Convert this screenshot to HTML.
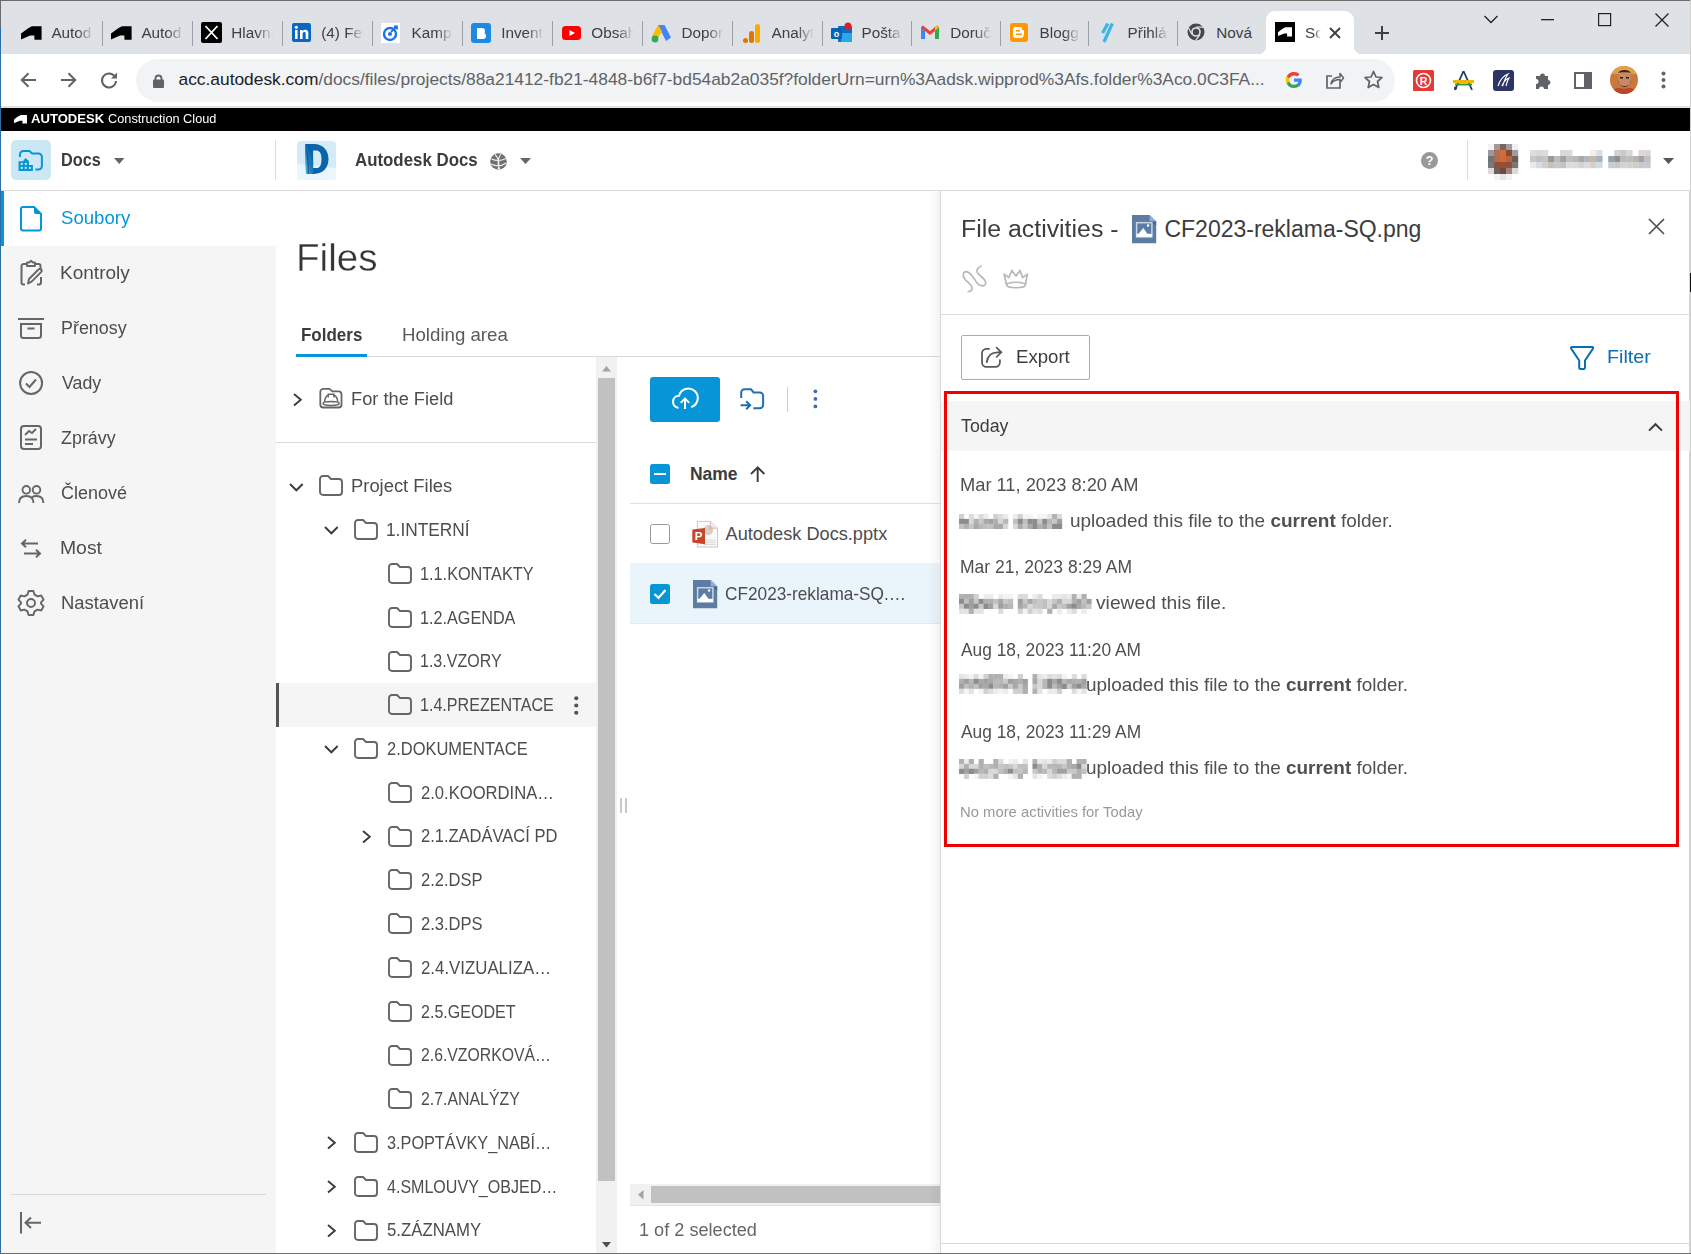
<!DOCTYPE html>
<html><head><meta charset="utf-8">
<style>
*{box-sizing:border-box;margin:0;padding:0}
html,body{width:1691px;height:1254px;overflow:hidden;background:#fff;font-family:"Liberation Sans",sans-serif;position:relative}
.a{position:absolute}
.t{position:absolute;white-space:nowrap;line-height:1;}
.t b{font-weight:bold}
svg{position:absolute;overflow:visible}
.fade{-webkit-mask-image:linear-gradient(90deg,#000 60%,transparent 100%);overflow:hidden}
</style></head><body>
<div class="a" style="left:0px;top:0px;width:1691px;height:54px;background:#dee1e6;"></div>
<div class="a" style="left:0px;top:0px;width:1691px;height:1px;background:#6b6b6b;"></div>
<div class="t fade" style="left:51.4px;top:25.3px;width:42.3px;height:20px;font-size:15.3px;color:#3c4043">Autod</div>
<div class="a" style="left:101.7px;top:21px;width:1px;height:25px;background:#9aa0a6;"></div>
<div class="t fade" style="left:141.4px;top:25.3px;width:42.2px;height:20px;font-size:15.3px;color:#3c4043">Autod</div>
<div class="a" style="left:191.6px;top:21px;width:1px;height:25px;background:#9aa0a6;"></div>
<div class="t fade" style="left:231.3px;top:25.3px;width:42.2px;height:20px;font-size:15.3px;color:#3c4043">Hlavní</div>
<div class="a" style="left:281.5px;top:21px;width:1px;height:25px;background:#9aa0a6;"></div>
<div class="t fade" style="left:321.2px;top:25.3px;width:42.7px;height:20px;font-size:15.3px;color:#3c4043">(4) Fee</div>
<div class="a" style="left:371.9px;top:21px;width:1px;height:25px;background:#9aa0a6;"></div>
<div class="t fade" style="left:411.6px;top:25.3px;width:41.9px;height:20px;font-size:15.3px;color:#3c4043">Kampa</div>
<div class="a" style="left:461.5px;top:21px;width:1px;height:25px;background:#9aa0a6;"></div>
<div class="t fade" style="left:501.2px;top:25.3px;width:42.4px;height:20px;font-size:15.3px;color:#3c4043">Invent</div>
<div class="a" style="left:551.6px;top:21px;width:1px;height:25px;background:#9aa0a6;"></div>
<div class="t fade" style="left:591.3px;top:25.3px;width:42.5px;height:20px;font-size:15.3px;color:#3c4043">Obsah</div>
<div class="a" style="left:641.8px;top:21px;width:1px;height:25px;background:#9aa0a6;"></div>
<div class="t fade" style="left:681.5px;top:25.3px;width:42.4px;height:20px;font-size:15.3px;color:#3c4043">Dopor</div>
<div class="a" style="left:731.9px;top:21px;width:1px;height:25px;background:#9aa0a6;"></div>
<div class="t fade" style="left:771.6px;top:25.3px;width:42.2px;height:20px;font-size:15.3px;color:#3c4043">Analyt</div>
<div class="a" style="left:821.8px;top:21px;width:1px;height:25px;background:#9aa0a6;"></div>
<div class="t fade" style="left:861.5px;top:25.3px;width:41.0px;height:20px;font-size:15.3px;color:#3c4043">Pošta</div>
<div class="a" style="left:910.5px;top:21px;width:1px;height:25px;background:#9aa0a6;"></div>
<div class="t fade" style="left:950.2px;top:25.3px;width:41.7px;height:20px;font-size:15.3px;color:#3c4043">Doruč</div>
<div class="a" style="left:999.9px;top:21px;width:1px;height:25px;background:#9aa0a6;"></div>
<div class="t fade" style="left:1039.6px;top:25.3px;width:40.3px;height:20px;font-size:15.3px;color:#3c4043">Blogg</div>
<div class="a" style="left:1087.9px;top:21px;width:1px;height:25px;background:#9aa0a6;"></div>
<div class="t fade" style="left:1127.6px;top:25.3px;width:41.0px;height:20px;font-size:15.3px;color:#3c4043">Přihlás</div>
<div class="a" style="left:1176.6px;top:21px;width:1px;height:25px;background:#9aa0a6;"></div>
<div class="t" style="left:1216.3px;top:25.3px;width:45.0px;height:20px;font-size:15.3px;color:#3c4043">Nová</div>
<svg style="left:20.5px;top:26px" width="21" height="14" viewBox="0 0 21 14"><path d="M0 13.4 V7.6 C3 5 7 2 11 0.2 H20.6 V13.8 H13.4 V9.4 H9.2 Z" fill="#000"/></svg>
<svg style="left:110.5px;top:26px" width="21" height="14" viewBox="0 0 21 14"><path d="M0 13.4 V7.6 C3 5 7 2 11 0.2 H20.6 V13.8 H13.4 V9.4 H9.2 Z" fill="#000"/></svg>
<svg style="left:201px;top:22px" width="20.5" height="20.5" viewBox="0 0 20.5 20.5"><rect width="21" height="21" rx="2" fill="#000"/><path d="M4.5 4 L16.5 17 M16.5 4 L4.5 17" stroke="#fff" stroke-width="1.8"/></svg>
<svg style="left:292px;top:23px" width="18" height="18" viewBox="0 0 18 18"><rect width="19" height="19" rx="2" fill="#0a66c2"/><rect x="3" y="7" width="2.6" height="9" fill="#fff"/><circle cx="4.3" cy="4.3" r="1.6" fill="#fff"/><path d="M8 7 h2.5 v1.3 c0.8-1.2 1.8-1.6 3-1.6 c2 0 2.8 1.3 2.8 3.5 V16 h-2.6 v-5.2 c0-1.2-0.4-1.8-1.4-1.8 c-1 0-1.7 0.7-1.7 2 V16 H8 Z" fill="#fff"/></svg>
<svg style="left:381px;top:23px" width="19" height="20" viewBox="0 0 19 20"><rect width="19" height="20" fill="#fff"/><circle cx="9" cy="11" r="6" fill="none" stroke="#1a73e8" stroke-width="2.4"/><circle cx="9" cy="11" r="2" fill="#1a73e8"/><path d="M10 9 L15 4 M13 3.5 h3 v3" stroke="#1a73e8" stroke-width="1.8" fill="none"/></svg>
<svg style="left:471px;top:23px" width="20" height="20" viewBox="0 0 20 20"><rect width="20" height="20" rx="3" fill="#1e88e5"/><path d="M6 5 h5 a3 3 0 0 1 0 6 h-5z M6 10 h6 a3 3 0 0 1 0 6 h-6z" fill="#fff"/></svg>
<svg style="left:562px;top:26px" width="19" height="14" viewBox="0 0 19 14"><rect width="19" height="14" rx="3.5" fill="#ff0000"/><path d="M7.5 4 L13 7 L7.5 10 Z" fill="#fff"/></svg>
<svg style="left:651px;top:23px" width="20" height="20" viewBox="0 0 20 20"><path d="M7 2 L13.5 2 L20 14.5 L15 18 Z" fill="#4285f4"/><path d="M7 2 L1 13 L6 17 L11 8 Z" fill="#fbbc04"/><circle cx="4" cy="16" r="3.4" fill="#34a853"/></svg>
<svg style="left:743px;top:23px" width="17" height="20" viewBox="0 0 17 20"><rect x="12" y="1" width="5" height="19" rx="2.5" fill="#f9ab00"/><rect x="6" y="8" width="5" height="12" rx="2.5" fill="#e37400"/><circle cx="2.5" cy="17.5" r="2.5" fill="#e37400"/></svg>
<svg style="left:831px;top:22px" width="21" height="21" viewBox="0 0 21 21"><rect x="7" y="4" width="14" height="16" rx="1" fill="#0f6cbd"/><rect x="10" y="11" width="11" height="9" fill="#28a8ea"/><rect x="0" y="6" width="11" height="11" rx="1" fill="#0364b8"/><text x="5.5" y="15" font-size="9" font-family="Liberation Sans" font-weight="bold" fill="#fff" text-anchor="middle">o</text><circle cx="17" cy="4" r="3.5" fill="#e11d2b"/></svg>
<svg style="left:921px;top:25px" width="18" height="14" viewBox="0 0 18 14"><path d="M0 2 V14 H4 V6 L9 10 L14 6 V14 H18 V2 L16 0.5 L9 6 L2 0.5 Z" fill="#ea4335"/><path d="M0 2 V14 H4 V6 Z" fill="#4285f4"/><path d="M14 6 V14 H18 V2 Z" fill="#34a853"/><path d="M18 2 L16 0.5 L14 2 V6 Z" fill="#fbbc04"/></svg>
<svg style="left:1010px;top:23px" width="18" height="19" viewBox="0 0 18 19"><rect width="18" height="19" rx="3" fill="#ff9800"/><path d="M5 4 h5 a2 2 0 0 1 2 2 v1 h1 a1 1 0 0 1 1 1 v3 a4 4 0 0 1-4 4 h-4 a3 3 0 0 1-3-3 v-5 a3 3 0 0 1 2-3z" fill="#fff"/><rect x="6" y="7" width="4" height="1.6" fill="#ff9800"/><rect x="6" y="10.5" width="6" height="1.6" fill="#ff9800"/></svg>
<svg style="left:1100px;top:22px" width="14" height="21" viewBox="0 0 14 21"><path d="M12.3 1.5 L4 20 M7.8 1.5 L2.6 11" stroke="#3cb4e8" stroke-width="3.2"/></svg>
<svg style="left:1187px;top:23px" width="18" height="18" viewBox="0 0 18 18"><circle cx="9" cy="9" r="8.5" fill="#45484c"/><circle cx="9" cy="9" r="4.8" fill="#dee1e6"/><circle cx="9" cy="9" r="3.2" fill="#45484c"/><path d="M9 4.2 H17 M5 11.5 L1.5 5 M12.8 11.8 L8.5 17.6" stroke="#dee1e6" stroke-width="1.3"/></svg>
<div class="a" style="left:1266px;top:11px;width:88px;height:43px;background:#fff;border-radius:9px 9px 0 0"></div>
<div class="a" style="left:1258px;top:46px;width:8px;height:8px;background:radial-gradient(circle at 0 0,#dee1e6 8px,#fff 8.5px)"></div>
<div class="a" style="left:1354px;top:46px;width:8px;height:8px;background:radial-gradient(circle at 100% 0,#dee1e6 8px,#fff 8.5px)"></div>
<svg style="left:1275px;top:22px" width="20" height="20" viewBox="0 0 20 20"><rect width="20" height="20" fill="#000"/><g transform="translate(3,5) scale(0.68)"><path d="M0 13.4 V7.6 C3 5 7 2 11 0.2 H20.6 V13.8 H13.4 V9.4 H9.2 Z" fill="#fff"/></g></svg>
<div class="t fade" style="left:1305px;top:25.3px;width:16px;height:20px;font-size:15.3px;color:#3c4043">Sc</div>
<svg style="left:1329px;top:27px" width="12" height="12" viewBox="0 0 12 12"><path d="M1 1 L11 11 M11 1 L1 11" stroke="#3c4043" stroke-width="1.9"/></svg>
<svg style="left:1374px;top:25px" width="16" height="16" viewBox="0 0 16 16"><path d="M8 1 V15 M1 8 H15" stroke="#3c4043" stroke-width="2"/></svg>
<svg style="left:1484px;top:15px" width="14" height="9" viewBox="0 0 14 9"><path d="M0.5 1 L7 7.5 L13.5 1" stroke="#202124" stroke-width="1.3" fill="none"/></svg>
<svg style="left:1541px;top:19px" width="13" height="1.5" viewBox="0 0 13 1.5"><rect width="13" height="1.3" fill="#202124"/></svg>
<svg style="left:1598px;top:13px" width="13" height="13" viewBox="0 0 13 13"><rect x="0.6" y="0.6" width="12" height="12" stroke="#202124" stroke-width="1.2" fill="none"/></svg>
<svg style="left:1655px;top:13px" width="14" height="14" viewBox="0 0 14 14"><path d="M0.5 0.5 L13.5 13.5 M13.5 0.5 L0.5 13.5" stroke="#202124" stroke-width="1.3"/></svg>
<div class="a" style="left:0px;top:54px;width:1691px;height:53px;background:#fff;"></div>
<div class="a" style="left:0px;top:106px;width:1691px;height:2px;background:#e3e3e3;"></div>
<svg style="left:20px;top:72px" width="17" height="16" viewBox="0 0 17 16"><path d="M16 8 H2 M8.5 1.3 L1.8 8 L8.5 14.7" stroke="#5f6368" stroke-width="2" fill="none"/></svg>
<svg style="left:60px;top:72px" width="17" height="16" viewBox="0 0 17 16"><path d="M1 8 H15 M8.5 1.3 L15.2 8 L8.5 14.7" stroke="#5f6368" stroke-width="2" fill="none"/></svg>
<svg style="left:100px;top:71px" width="18" height="18" viewBox="0 0 18 18"><path d="M14.8 5.5 A7 7 0 1 0 16 10" stroke="#5f6368" stroke-width="2" fill="none"/><path d="M17 1.5 V7.5 H11 Z" fill="#5f6368"/></svg>
<div class="a" style="left:136px;top:59px;width:1259px;height:43px;border-radius:22px;background:#f1f3f4"></div>
<svg style="left:153px;top:74px" width="11" height="14" viewBox="0 0 11 14"><rect x="0" y="5.5" width="11" height="8.5" rx="1" fill="#5f6368"/><path d="M2.5 6 V4.5 a3 3 0 0 1 6 0 V6" stroke="#5f6368" stroke-width="1.8" fill="none"/></svg>
<div class="t" style="left:178.5px;top:70.9px;font-size:17.38px;color:#5f6368"><span style="color:#202124">acc.autodesk.com</span>/docs/files/projects/88a21412-fb21-4848-b6f7-bd54ab2a035f?folderUrn=urn%3Aadsk.wipprod%3Afs.folder%3Aco.0C3FA...</div>
<svg style="left:1285px;top:71px" width="18" height="18" viewBox="0 0 18 18"><path d="M16.8 9.2 c0-0.6-0.1-1.2-0.2-1.7 H9 v3.3 h4.4 a3.8 3.8 0 0 1-1.6 2.4 v2 h2.6 c1.5-1.4 2.4-3.5 2.4-6z" fill="#4285f4"/><path d="M9 17 c2.2 0 4-0.7 5.4-2 l-2.6-2 c-0.7 0.5-1.7 0.8-2.8 0.8 c-2.1 0-3.9-1.4-4.6-3.4 H1.7 v2.1 A8 8 0 0 0 9 17z" fill="#34a853"/><path d="M4.4 10.4 a4.9 4.9 0 0 1 0-3.1 V5.2 H1.7 a8 8 0 0 0 0 7.3z" fill="#fbbc05"/><path d="M9 4.4 c1.2 0 2.3 0.4 3.2 1.2 l2.3-2.3 A8 8 0 0 0 1.7 5.2 l2.7 2.1 C5.1 5.8 6.9 4.4 9 4.4z" fill="#ea4335"/></svg>
<svg style="left:1325px;top:71px" width="19" height="18" viewBox="0 0 19 18"><path d="M7 5 H2 V17 H15 V12" stroke="#5f6368" stroke-width="1.7" fill="none"/><path d="M6 13 C7 8 10 6 15 6 V2.5 L18.5 7 L15 11.5 V8.5 C11 8.5 8 10 6 13z" stroke="#5f6368" stroke-width="1.5" fill="none" stroke-linejoin="round"/></svg>
<svg style="left:1364px;top:70px" width="19" height="19" viewBox="0 0 19 19"><path d="M9.5 1.5 L12 7 L18 7.5 L13.5 11.5 L14.8 17.5 L9.5 14.4 L4.2 17.5 L5.5 11.5 L1 7.5 L7 7 Z" stroke="#5f6368" stroke-width="1.7" fill="none" stroke-linejoin="round"/></svg>
<svg style="left:1413px;top:70px" width="21" height="21" viewBox="0 0 21 21"><rect width="21" height="21" rx="1.5" fill="#e53935"/><circle cx="10.5" cy="10.5" r="7" stroke="#fff" stroke-width="1.6" fill="none"/><text x="10.5" y="14.5" font-size="10.5" font-weight="bold" font-family="Liberation Sans" fill="#fff" text-anchor="middle">R</text></svg>
<svg style="left:1453px;top:70px" width="21" height="21" viewBox="0 0 21 21"><path d="M10.5 1 L2 20 M10.5 1 L19 20" stroke="#1b3d6d" stroke-width="1.8" fill="none"/><rect x="0" y="10" width="21" height="3" fill="#f2b600"/><rect x="2" y="13.5" width="17" height="2" fill="#2e9e44"/><circle cx="2.5" cy="18" r="1.6" fill="#1b3d6d"/></svg>
<svg style="left:1493px;top:70px" width="21" height="21" viewBox="0 0 21 21"><rect width="21" height="21" rx="3" fill="#2d3566"/><path d="M5 16 C7 10 10 6 15 4 C12 8 11 12 9.5 16 M9 16 C11 11 13 9 16 8 C14 11 13.5 14 13 16" stroke="#fff" stroke-width="1.2" fill="none"/></svg>
<svg style="left:1534px;top:71px" width="19" height="19" viewBox="0 0 19 19"><path d="M2 5 H6 A2.5 2.5 0 0 1 11 5 H14 V9 A2.5 2.5 0 0 1 14 14 V18 H10 A2.5 2.5 0 0 0 5 18 H2 V13 A2.5 2.5 0 0 0 2 8 Z" fill="#5f6368"/></svg>
<svg style="left:1574px;top:72px" width="18" height="17" viewBox="0 0 18 17"><rect x="1" y="1" width="16" height="15" stroke="#5f6368" stroke-width="2" fill="none"/><rect x="10" y="1" width="7" height="15" fill="#5f6368"/></svg>
<svg style="left:1610px;top:66px" width="28" height="28" viewBox="0 0 28 28"><defs><clipPath id="avc"><circle cx="14" cy="14" r="14"/></clipPath></defs><g clip-path="url(#avc)"><rect width="28" height="28" fill="#c8793a"/><rect y="0" width="28" height="8" fill="#e0a050"/><ellipse cx="14.5" cy="13" rx="6.5" ry="8" fill="#c88a66"/><path d="M8 7 C10 3 19 3 21 7 C20 6 9 6 8 7z" fill="#3a2418"/><path d="M8 14 C8 22 21 22 21 14 C20 18 18 21 14.5 21 C11 21 9 18 8 14z" fill="#4a2a1a"/><rect x="10" y="11" width="3" height="1.5" fill="#2a1a10"/><rect x="16" y="11" width="3" height="1.5" fill="#2a1a10"/><path d="M0 28 C3 22 8 21 14 23 C20 21 25 22 28 28z" fill="#b8482a"/></g></svg>
<svg style="left:1661px;top:71px" width="5" height="18" viewBox="0 0 5 18"><circle cx="2.5" cy="2.5" r="2" fill="#5f6368"/><circle cx="2.5" cy="9" r="2" fill="#5f6368"/><circle cx="2.5" cy="15.5" r="2" fill="#5f6368"/></svg>
<div class="a" style="left:0px;top:108px;width:1691px;height:23px;background:#000;"></div>
<svg style="left:14px;top:114.5px" width="13" height="9" viewBox="0 0 13 9"><g transform="scale(0.63,0.62)"><path d="M0 13.4 V7.6 C3 5 7 2 11 0.2 H20.6 V13.8 H13.4 V9.4 H9.2 Z" fill="#fff"/></g></svg>
<div class="t" style="left:30.81px;top:113.04px;font-size:12.0px;color:#fff;font-weight:bold;transform:scaleX(1.0901);transform-origin:0 0;">AUTODESK</div>
<div class="t" style="left:107.56px;top:112.73px;font-size:12.6px;color:#fff;transform:scaleX(1.0122);transform-origin:0 0;">Construction Cloud</div>
<div class="a" style="left:0px;top:131px;width:1691px;height:60px;background:#fff;border-bottom:1px solid #d9d9d9"></div>
<div class="a" style="left:11px;top:140px;width:40px;height:40px;border-radius:5px;background:#cce8f6"></div>
<svg style="left:18px;top:149px" width="26" height="23" viewBox="0 0 26 23"><path d="M1.96 7.9 V5.4 a3.5 3.5 0 0 1 3.5-3.5 H11.3 L14.2 4.4 H20.4 a3.5 3.5 0 0 1 3.5 3.5 V17 a3.5 3.5 0 0 1-3.5 3.5 H17.3" stroke="#0696d7" stroke-width="2" fill="none"/><path d="M0.56 12.3 H4.95 L7.5 8.9 L10.93 11.9 V15.9 H14.9 V21.9 H0.56 Z" fill="#0696d7"/><rect x="2.75" y="13.9" width="2" height="2" fill="#cce8f6"/><rect x="6.74" y="13.9" width="2" height="2" fill="#cce8f6"/><rect x="2.75" y="17.9" width="2" height="2" fill="#cce8f6"/><rect x="6.74" y="17.9" width="2" height="2" fill="#cce8f6"/><rect x="10.9" y="17.9" width="2" height="2" fill="#cce8f6"/></svg>
<div class="t" style="left:60.86px;top:150.76px;font-size:18px;color:#3c3c3c;font-weight:bold;transform:scaleX(0.9022);transform-origin:0 0;">Docs</div>
<svg style="left:113.5px;top:158px" width="10.5" height="6" viewBox="0 0 10.5 6"><path d="M0 0 H10.5 L5.25 6 Z" fill="#666"/></svg>
<div class="a" style="left:275px;top:140px;width:1px;height:40px;background:#dcdcdc;"></div>
<svg style="left:297px;top:141px" width="39" height="39" viewBox="0 0 39 39"><defs><linearGradient id="dd" x1="0" y1="1" x2="1" y2="0"><stop offset="0" stop-color="#5cbbe6"/><stop offset="0.45" stop-color="#1a7cc0"/><stop offset="1" stop-color="#0a5e9e"/></linearGradient></defs><rect x="0" y="0" width="39" height="39" rx="4" fill="#d3ecf8"/><path d="M0 23 L12 24 L39 27 V35 a4 4 0 0 1-4 4 H4 a4 4 0 0 1-4-4z" fill="#e9f6fc"/><path d="M8.2 3 H17 C26 3 31.5 9.5 31.5 18 C31.5 26.5 26 32.9 17 32.9 H9 Z M16.1 9.4 V27.1 H19.5 C23 27.1 24.5 23.5 24.5 18.2 C24.5 13 23 9.4 19.5 9.4 Z" fill="#0b64a8" fill-rule="evenodd"/><path d="M8.2 3 L16.1 20 V32.9 H9 Z" fill="url(#dd)"/><path d="M9.5 9 C11 15 11.5 25 11.3 32.9" stroke="#0a4f86" stroke-width="0.9" fill="none"/></svg>
<div class="t" style="left:354.69px;top:150.74px;font-size:18.5px;color:#3c3c3c;font-weight:bold;transform:scaleX(0.9109);transform-origin:0 0;">Autodesk Docs</div>
<svg style="left:490px;top:153px" width="17" height="17" viewBox="0 0 17 17"><circle cx="8.5" cy="8.5" r="8.3" fill="#707070"/><path d="M1.5 6 C6 8 11 8 16 5.5 M1 11 C6 13.5 12 13 16 10 M5 1.5 C9 5 10 12 8 16.5 M11 1 C7.5 5 7 12 10 16.5" stroke="#f0f0f0" stroke-width="1.1" fill="none"/></svg>
<svg style="left:520px;top:158px" width="11" height="6" viewBox="0 0 11 6"><path d="M0 0 H11 L5.5 6 Z" fill="#666"/></svg>
<svg style="left:1420.5px;top:151.7px" width="17" height="17" viewBox="0 0 17 17"><circle cx="8.5" cy="8.5" r="8.5" fill="#999"/><text x="8.5" y="13.3" font-size="12.5" font-weight="bold" font-family="Liberation Sans" fill="#fff" text-anchor="middle">?</text></svg>
<div class="a" style="left:1467px;top:140px;width:1px;height:40px;background:#dcdcdc;"></div>
<svg style="left:1488px;top:144px" width="30" height="36" viewBox="0 0 30 36"><rect x="0" y="0" width="6.2" height="6.2" fill="#f4f2f4"/><rect x="6" y="0" width="6.2" height="6.2" fill="#a09a9c"/><rect x="12" y="0" width="6.2" height="6.2" fill="#7a6560"/><rect x="18" y="0" width="6.2" height="6.2" fill="#a09d9e"/><rect x="24" y="0" width="6.2" height="6.2" fill="#f0eef0"/><rect x="0" y="6" width="6.2" height="6.2" fill="#9a9a9c"/><rect x="6" y="6" width="6.2" height="6.2" fill="#b07058"/><rect x="12" y="6" width="6.2" height="6.2" fill="#d06a40"/><rect x="18" y="6" width="6.2" height="6.2" fill="#8a4a30"/><rect x="24" y="6" width="6.2" height="6.2" fill="#a09c9c"/><rect x="0" y="12" width="6.2" height="6.2" fill="#707478"/><rect x="6" y="12" width="6.2" height="6.2" fill="#a86e58"/><rect x="12" y="12" width="6.2" height="6.2" fill="#d06838"/><rect x="18" y="12" width="6.2" height="6.2" fill="#c06038"/><rect x="24" y="12" width="6.2" height="6.2" fill="#6a5a58"/><rect x="0" y="18" width="6.2" height="6.2" fill="#787a7e"/><rect x="6" y="18" width="6.2" height="6.2" fill="#905040"/><rect x="12" y="18" width="6.2" height="6.2" fill="#a04a30"/><rect x="18" y="18" width="6.2" height="6.2" fill="#8a5040"/><rect x="24" y="18" width="6.2" height="6.2" fill="#787878"/><rect x="0" y="24" width="6.2" height="6.2" fill="#dcdadc"/><rect x="6" y="24" width="6.2" height="6.2" fill="#6a6060"/><rect x="12" y="24" width="6.2" height="6.2" fill="#6d4a40"/><rect x="18" y="24" width="6.2" height="6.2" fill="#a08078"/><rect x="24" y="24" width="6.2" height="6.2" fill="#dcd8d8"/><rect x="0" y="30" width="6.2" height="6.2" fill="#ffffff"/><rect x="6" y="30" width="6.2" height="6.2" fill="#f4f2f4"/><rect x="12" y="30" width="6.2" height="6.2" fill="#e8e4e8"/><rect x="18" y="30" width="6.2" height="6.2" fill="#f4f2f4"/><rect x="24" y="30" width="6.2" height="6.2" fill="#ffffff"/></svg>
<svg style="left:1530px;top:150px" width="121" height="18" viewBox="0 0 121 18"><rect x="0.00" y="0" width="6.3" height="6.2" fill="#dcdcdc"/><rect x="6.02" y="0" width="6.3" height="6.2" fill="#d8d8d8"/><rect x="12.04" y="0" width="6.3" height="6.2" fill="#dcdcdc"/><rect x="30.10" y="0" width="6.3" height="6.2" fill="#d8d8d8"/><rect x="36.12" y="0" width="6.3" height="6.2" fill="#dadada"/><rect x="60.20" y="0" width="6.3" height="6.2" fill="#f4eee8"/><rect x="66.22" y="0" width="6.3" height="6.2" fill="#dcdee2"/><rect x="84.28" y="0" width="6.3" height="6.2" fill="#d0d2d6"/><rect x="90.30" y="0" width="6.3" height="6.2" fill="#ccc8c6"/><rect x="96.32" y="0" width="6.3" height="6.2" fill="#d8d8d8"/><rect x="108.36" y="0" width="6.3" height="6.2" fill="#e0d8d0"/><rect x="114.38" y="0" width="6.3" height="6.2" fill="#d8d4d8"/><rect x="0.00" y="6" width="6.3" height="6.2" fill="#c8c8c8"/><rect x="6.02" y="6" width="6.3" height="6.2" fill="#c0c0c0"/><rect x="12.04" y="6" width="6.3" height="6.2" fill="#c8c4c0"/><rect x="18.06" y="6" width="6.3" height="6.2" fill="#a09890"/><rect x="24.08" y="6" width="6.3" height="6.2" fill="#b8bcc4"/><rect x="30.10" y="6" width="6.3" height="6.2" fill="#a0a4a8"/><rect x="36.12" y="6" width="6.3" height="6.2" fill="#c0c0bc"/><rect x="42.14" y="6" width="6.3" height="6.2" fill="#b8bab8"/><rect x="48.16" y="6" width="6.3" height="6.2" fill="#a8aaa8"/><rect x="54.18" y="6" width="6.3" height="6.2" fill="#b8b4b8"/><rect x="60.20" y="6" width="6.3" height="6.2" fill="#c0b8b0"/><rect x="66.22" y="6" width="6.3" height="6.2" fill="#a8b0b8"/><rect x="78.26" y="6" width="6.3" height="6.2" fill="#98a0a8"/><rect x="84.28" y="6" width="6.3" height="6.2" fill="#909090"/><rect x="90.30" y="6" width="6.3" height="6.2" fill="#b8bcc0"/><rect x="96.32" y="6" width="6.3" height="6.2" fill="#c0bcb8"/><rect x="102.34" y="6" width="6.3" height="6.2" fill="#b8b4b0"/><rect x="108.36" y="6" width="6.3" height="6.2" fill="#a0a4a8"/><rect x="114.38" y="6" width="6.3" height="6.2" fill="#c0c0c8"/><rect x="0.00" y="12" width="6.3" height="6.2" fill="#ece8e4"/><rect x="6.02" y="12" width="6.3" height="6.2" fill="#d8dce0"/><rect x="12.04" y="12" width="6.3" height="6.2" fill="#d0d0cc"/><rect x="18.06" y="12" width="6.3" height="6.2" fill="#c4c0bc"/><rect x="24.08" y="12" width="6.3" height="6.2" fill="#c8c8cc"/><rect x="30.10" y="12" width="6.3" height="6.2" fill="#c0c4c8"/><rect x="36.12" y="12" width="6.3" height="6.2" fill="#dcdcd8"/><rect x="42.14" y="12" width="6.3" height="6.2" fill="#d8dcdc"/><rect x="48.16" y="12" width="6.3" height="6.2" fill="#d0d4d4"/><rect x="54.18" y="12" width="6.3" height="6.2" fill="#dcd8dc"/><rect x="60.20" y="12" width="6.3" height="6.2" fill="#d8d0c8"/><rect x="66.22" y="12" width="6.3" height="6.2" fill="#d0dce4"/><rect x="78.26" y="12" width="6.3" height="6.2" fill="#c8ccd0"/><rect x="84.28" y="12" width="6.3" height="6.2" fill="#c8c8c8"/><rect x="90.30" y="12" width="6.3" height="6.2" fill="#d0d4d4"/><rect x="96.32" y="12" width="6.3" height="6.2" fill="#d0d0d0"/><rect x="102.34" y="12" width="6.3" height="6.2" fill="#d0ccc8"/><rect x="108.36" y="12" width="6.3" height="6.2" fill="#c8c8cc"/><rect x="114.38" y="12" width="6.3" height="6.2" fill="#c8c8d0"/></svg>
<svg style="left:1663px;top:158px" width="11" height="6" viewBox="0 0 11 6"><path d="M0 0 H11 L5.5 6 Z" fill="#555"/></svg>
<div class="a" style="left:0px;top:191px;width:276px;height:1063px;background:#f5f5f5;"></div>
<div class="a" style="left:0px;top:191px;width:276px;height:55px;background:#fff;"></div>
<div class="a" style="left:1px;top:191px;width:3px;height:55px;background:#0696d7;"></div>
<div class="a" style="left:0px;top:131px;width:1px;height:1122px;background:#2b6ea8;"></div>
<div class="t" style="left:61.07px;top:209.01px;font-size:18.3px;color:#0696d7;transform:scaleX(1.0170);transform-origin:0 0;">Soubory</div>
<div class="t" style="left:60.48px;top:264.01px;font-size:18.3px;color:#4d4d4d;transform:scaleX(1.0411);transform-origin:0 0;">Kontroly</div>
<div class="t" style="left:60.57px;top:319.01px;font-size:18.3px;color:#4d4d4d;transform:scaleX(0.9787);transform-origin:0 0;">Přenosy</div>
<div class="t" style="left:61.82px;top:374.01px;font-size:18.3px;color:#4d4d4d;transform:scaleX(0.9737);transform-origin:0 0;">Vady</div>
<div class="t" style="left:61.46px;top:429.01px;font-size:18.3px;color:#4d4d4d;transform:scaleX(0.9793);transform-origin:0 0;">Zprávy</div>
<div class="t" style="left:61.10px;top:484.01px;font-size:18.3px;color:#4d4d4d;transform:scaleX(0.9827);transform-origin:0 0;">Členové</div>
<div class="t" style="left:60.45px;top:539.01px;font-size:18.3px;color:#4d4d4d;transform:scaleX(1.0587);transform-origin:0 0;">Most</div>
<div class="t" style="left:60.52px;top:594.01px;font-size:18.3px;color:#4d4d4d;transform:scaleX(1.0086);transform-origin:0 0;">Nastavení</div>
<svg style="left:20px;top:205.5px" width="22" height="25.5" viewBox="0 0 22 25.5"><path d="M3 1 H14 L21 8 V22.5 a2 2 0 0 1-2 2 H3 a2 2 0 0 1-2-2 V3 a2 2 0 0 1 2-2z" stroke="#0696d7" stroke-width="2" fill="none"/><path d="M14 1 L21 8 H16 a2 2 0 0 1-2-2z" fill="#0696d7"/></svg>
<svg style="left:19.5px;top:259.5px" width="23" height="25.5" viewBox="0 0 23 25.5"><path d="M7 4 H3.5 a2 2 0 0 0-2 2 V22.5 a2 2 0 0 0 2 2 H5 M15 4 H18.5 a2 2 0 0 1 2 2 V10" stroke="#666" stroke-width="2" fill="none"/><path d="M7 2.5 H9 L11 0.8 L13 2.5 H15 V6 H7 Z" stroke="#666" stroke-width="1.8" fill="none" stroke-linejoin="round"/><path d="M8 23.5 L9 19 L18.5 9.5 a1.8 1.8 0 0 1 2.6 2.6 L11.6 21.6 Z" stroke="#666" stroke-width="1.9" fill="none" stroke-linejoin="round"/><path d="M21 17 V22.5 a2 2 0 0 1-2 2 H17" stroke="#666" stroke-width="2" fill="none"/></svg>
<svg style="left:18px;top:318px" width="26" height="21" viewBox="0 0 26 21"><path d="M0 1 H26" stroke="#666" stroke-width="2"/><path d="M3 6 H23 V17.5 a2.5 2.5 0 0 1-2.5 2.5 H5.5 a2.5 2.5 0 0 1-2.5-2.5Z" stroke="#666" stroke-width="2" fill="none"/><path d="M9.5 10.5 H16.5" stroke="#666" stroke-width="2"/></svg>
<svg style="left:18.8px;top:371.3px" width="24.2" height="24" viewBox="0 0 24.2 24"><circle cx="12.1" cy="12" r="11" stroke="#666" stroke-width="2" fill="none"/><path d="M7 12.5 L10.5 16 L17 8.5" stroke="#666" stroke-width="2" fill="none"/></svg>
<svg style="left:20px;top:425.4px" width="22" height="25" viewBox="0 0 22 25"><rect x="1" y="1" width="20" height="23" rx="3" stroke="#666" stroke-width="2" fill="none"/><path d="M5 10 L9 6 L12 8 L16 4" stroke="#666" stroke-width="1.8" fill="none"/><path d="M5 14.5 H17 M5 19 H13" stroke="#666" stroke-width="2"/></svg>
<svg style="left:17.6px;top:484.5px" width="26.4" height="18.5" viewBox="0 0 26.4 18.5"><circle cx="8.3" cy="4.8" r="3.8" stroke="#666" stroke-width="1.9" fill="none"/><circle cx="18.5" cy="4.8" r="3.8" stroke="#666" stroke-width="1.9" fill="none"/><path d="M1 18 C1 13 4 11 8.3 11 C12.5 11 15.5 13 15.5 18 M14 12.2 C15 11.4 16.5 11 18.5 11 C22.5 11 25.4 13 25.4 18" stroke="#666" stroke-width="1.9" fill="none"/></svg>
<svg style="left:20px;top:538.7px" width="22" height="19" viewBox="0 0 22 19"><path d="M2 4.5 H18 M6 0.8 L2 4.5 L6 8.2" stroke="#666" stroke-width="2" fill="none"/><path d="M4 14.5 H20 M16 10.8 L20 14.5 L16 18.2" stroke="#666" stroke-width="2" fill="none"/></svg>
<svg style="left:18px;top:590px" width="26" height="26" viewBox="0 0 26 26"><path d="M10.6 1 H15.4 L16.5 4.6 L19.6 6.4 L23.2 5.5 L25.6 9.7 L23 12.4 V13.6 L25.6 16.3 L23.2 20.5 L19.6 19.6 L16.5 21.4 L15.4 25 H10.6 L9.5 21.4 L6.4 19.6 L2.8 20.5 L0.4 16.3 L3 13.6 V12.4 L0.4 9.7 L2.8 5.5 L6.4 6.4 L9.5 4.6 Z" stroke="#666" stroke-width="1.9" fill="none" stroke-linejoin="round"/><circle cx="13" cy="13" r="4" stroke="#666" stroke-width="1.9" fill="none"/></svg>
<div class="a" style="left:11px;top:1194px;width:255px;height:1px;background:#d9d9d9;"></div>
<svg style="left:20px;top:1212px" width="22" height="21.5" viewBox="0 0 22 21.5"><path d="M1 0 V21.5" stroke="#666" stroke-width="2"/><path d="M21 10.7 H6 M11 5.5 L5.5 10.7 L11 16" stroke="#666" stroke-width="2" fill="none"/></svg>
<div class="t" style="left:295.91px;top:238.73px;font-size:38px;color:#353535;transform:scaleX(1.0156);transform-origin:0 0;-webkit-text-stroke:0.35px #fff;">Files</div>
<div class="t" style="left:301.11px;top:327.19px;font-size:17.5px;color:#3c3c3c;font-weight:bold;transform:scaleX(0.9703);transform-origin:0 0;">Folders</div>
<div class="t" style="left:401.51px;top:326.34px;font-size:18.5px;color:#5a5a5a;transform:scaleX(1.0086);transform-origin:0 0;">Holding area</div>
<div class="a" style="left:296px;top:356px;width:644px;height:1px;background:#d9d9d9;"></div>
<div class="a" style="left:296px;top:353.7px;width:71px;height:3px;background:#0696d7;"></div>
<div class="a" style="left:596px;top:357px;width:21px;height:897px;background:#f1f1f1;"></div>
<div class="a" style="left:598px;top:378px;width:17px;height:803px;background:#c1c1c1;"></div>
<svg style="left:602px;top:366px" width="9" height="5.5" viewBox="0 0 9 5.5"><path d="M0 5.5 L4.5 0 L9 5.5Z" fill="#a3a3a3"/></svg>
<svg style="left:602px;top:1241.6px" width="9" height="5.5" viewBox="0 0 9 5.5"><path d="M0 0 L4.5 5.5 L9 0Z" fill="#505050"/></svg>
<div class="a" style="left:620px;top:798px;width:2px;height:15px;background:#c8c8c8;"></div>
<div class="a" style="left:624.5px;top:798px;width:2px;height:15px;background:#c8c8c8;"></div>
<svg style="left:292.5px;top:392.5px" width="9" height="13.5" viewBox="0 0 9 13.5"><path d="M1 1 L7.8 6.75 L1 12.5" stroke="#3c3c3c" stroke-width="1.9" fill="none"/></svg>
<svg style="left:319px;top:388.4px" width="24" height="21" viewBox="0 0 24 21"><path d="M1.3 3.9 a3 3 0 0 1 3-3 H10.6 L13.3 3.4 H19.5 a3 3 0 0 1 3 3 V16.5 a3 3 0 0 1-3 3 H4.3 a3 3 0 0 1-3-3 Z" stroke="#666" stroke-width="1.8" fill="none" stroke-linejoin="round"/><path d="M5.6 14.2 C5.6 9.8 7 8 9.3 7.2 V6.3 H14.9 V7.2 C17.2 8 18.7 9.8 18.7 14.2" stroke="#666" stroke-width="1.5" fill="none"/><path d="M9.3 6.5 V9.6 M14.9 6.5 V9.6" stroke="#666" stroke-width="1.5"/><ellipse cx="12.1" cy="15.5" rx="8.1" ry="1.9" stroke="#666" stroke-width="1.5" fill="none"/><path d="M8.5 13.9 C10.5 13.4 13.5 13.4 15.6 13.9" stroke="#666" stroke-width="1.1" fill="none"/></svg>
<div class="t" style="left:351.04px;top:390.26px;font-size:18px;color:#4d4d4d;transform:scaleX(1.0136);transform-origin:0 0;">For the Field</div>
<div class="a" style="left:276px;top:442px;width:320px;height:1px;background:#d9d9d9;"></div>
<svg style="left:289.0px;top:482.7px" width="14.7" height="8.3" viewBox="0 0 14.7 8.3"><path d="M1 1 L7.35 7.3 L13.7 1" stroke="#3c3c3c" stroke-width="1.9" fill="none"/></svg>
<svg style="left:319.0px;top:475.4px" width="24" height="21" viewBox="0 0 24 21"><path d="M1 4 a3 3 0 0 1 3-3 h5 l3 3 h8 a3 3 0 0 1 3 3 v10 a3 3 0 0 1-3 3 H4 a3 3 0 0 1-3-3z" stroke="#666" stroke-width="1.9" fill="none" stroke-linejoin="round"/></svg>
<div class="t" style="left:351.03px;top:477.21px;font-size:18.3px;color:#4d4d4d;transform:scaleX(1.0055);transform-origin:0 0;">Project Files</div>
<svg style="left:323.6px;top:526.48px" width="14.7" height="8.3" viewBox="0 0 14.7 8.3"><path d="M1 1 L7.35 7.3 L13.7 1" stroke="#3c3c3c" stroke-width="1.9" fill="none"/></svg>
<svg style="left:353.6px;top:519.18px" width="24" height="21" viewBox="0 0 24 21"><path d="M1 4 a3 3 0 0 1 3-3 h5 l3 3 h8 a3 3 0 0 1 3 3 v10 a3 3 0 0 1-3 3 H4 a3 3 0 0 1-3-3z" stroke="#666" stroke-width="1.9" fill="none" stroke-linejoin="round"/></svg>
<div class="t" style="left:386.22px;top:520.99px;font-size:18.3px;color:#4d4d4d;transform:scaleX(0.9460);transform-origin:0 0;">1.INTERNÍ</div>
<svg style="left:388.2px;top:562.9599999999999px" width="24" height="21" viewBox="0 0 24 21"><path d="M1 4 a3 3 0 0 1 3-3 h5 l3 3 h8 a3 3 0 0 1 3 3 v10 a3 3 0 0 1-3 3 H4 a3 3 0 0 1-3-3z" stroke="#666" stroke-width="1.9" fill="none" stroke-linejoin="round"/></svg>
<div class="t" style="left:420.10px;top:564.77px;font-size:18.3px;color:#4d4d4d;transform:scaleX(0.8896);transform-origin:0 0;">1.1.KONTAKTY</div>
<svg style="left:388.2px;top:606.74px" width="24" height="21" viewBox="0 0 24 21"><path d="M1 4 a3 3 0 0 1 3-3 h5 l3 3 h8 a3 3 0 0 1 3 3 v10 a3 3 0 0 1-3 3 H4 a3 3 0 0 1-3-3z" stroke="#666" stroke-width="1.9" fill="none" stroke-linejoin="round"/></svg>
<div class="t" style="left:420.10px;top:608.55px;font-size:18.3px;color:#4d4d4d;transform:scaleX(0.8856);transform-origin:0 0;">1.2.AGENDA</div>
<svg style="left:388.2px;top:650.52px" width="24" height="21" viewBox="0 0 24 21"><path d="M1 4 a3 3 0 0 1 3-3 h5 l3 3 h8 a3 3 0 0 1 3 3 v10 a3 3 0 0 1-3 3 H4 a3 3 0 0 1-3-3z" stroke="#666" stroke-width="1.9" fill="none" stroke-linejoin="round"/></svg>
<div class="t" style="left:420.12px;top:652.33px;font-size:18.3px;color:#4d4d4d;transform:scaleX(0.8761);transform-origin:0 0;">1.3.VZORY</div>
<div class="a" style="left:276px;top:683.2px;width:320px;height:43.6px;background:#f5f5f5;"></div>
<div class="a" style="left:276px;top:683.2px;width:2.5px;height:43.6px;background:#555;"></div>
<svg style="left:573.5px;top:695.5px" width="4.5" height="19" viewBox="0 0 4.5 19"><circle cx="2.25" cy="2.25" r="2.1" fill="#555"/><circle cx="2.25" cy="9.5" r="2.1" fill="#555"/><circle cx="2.25" cy="16.75" r="2.1" fill="#555"/></svg>
<svg style="left:388.2px;top:694.3px" width="24" height="21" viewBox="0 0 24 21"><path d="M1 4 a3 3 0 0 1 3-3 h5 l3 3 h8 a3 3 0 0 1 3 3 v10 a3 3 0 0 1-3 3 H4 a3 3 0 0 1-3-3z" stroke="#666" stroke-width="1.9" fill="none" stroke-linejoin="round"/></svg>
<div class="t" style="left:420.11px;top:696.11px;font-size:18.3px;color:#4d4d4d;transform:scaleX(0.8796);transform-origin:0 0;">1.4.PREZENTACE</div>
<svg style="left:323.6px;top:745.3800000000001px" width="14.7" height="8.3" viewBox="0 0 14.7 8.3"><path d="M1 1 L7.35 7.3 L13.7 1" stroke="#3c3c3c" stroke-width="1.9" fill="none"/></svg>
<svg style="left:353.6px;top:738.08px" width="24" height="21" viewBox="0 0 24 21"><path d="M1 4 a3 3 0 0 1 3-3 h5 l3 3 h8 a3 3 0 0 1 3 3 v10 a3 3 0 0 1-3 3 H4 a3 3 0 0 1-3-3z" stroke="#666" stroke-width="1.9" fill="none" stroke-linejoin="round"/></svg>
<div class="t" style="left:386.78px;top:739.89px;font-size:18.3px;color:#4d4d4d;transform:scaleX(0.9015);transform-origin:0 0;">2.DOKUMENTACE</div>
<svg style="left:388.2px;top:781.86px" width="24" height="21" viewBox="0 0 24 21"><path d="M1 4 a3 3 0 0 1 3-3 h5 l3 3 h8 a3 3 0 0 1 3 3 v10 a3 3 0 0 1-3 3 H4 a3 3 0 0 1-3-3z" stroke="#666" stroke-width="1.9" fill="none" stroke-linejoin="round"/></svg>
<div class="t" style="left:420.57px;top:783.67px;font-size:18.3px;color:#4d4d4d;transform:scaleX(0.9084);transform-origin:0 0;">2.0.KOORDINA…</div>
<svg style="left:361.7px;top:829.94px" width="9" height="13.5" viewBox="0 0 9 13.5"><path d="M1 1 L7.8 6.75 L1 12.5" stroke="#3c3c3c" stroke-width="1.9" fill="none"/></svg>
<svg style="left:388.2px;top:825.64px" width="24" height="21" viewBox="0 0 24 21"><path d="M1 4 a3 3 0 0 1 3-3 h5 l3 3 h8 a3 3 0 0 1 3 3 v10 a3 3 0 0 1-3 3 H4 a3 3 0 0 1-3-3z" stroke="#666" stroke-width="1.9" fill="none" stroke-linejoin="round"/></svg>
<div class="t" style="left:420.57px;top:827.45px;font-size:18.3px;color:#4d4d4d;transform:scaleX(0.9029);transform-origin:0 0;">2.1.ZADÁVACÍ PD</div>
<svg style="left:388.2px;top:869.42px" width="24" height="21" viewBox="0 0 24 21"><path d="M1 4 a3 3 0 0 1 3-3 h5 l3 3 h8 a3 3 0 0 1 3 3 v10 a3 3 0 0 1-3 3 H4 a3 3 0 0 1-3-3z" stroke="#666" stroke-width="1.9" fill="none" stroke-linejoin="round"/></svg>
<div class="t" style="left:420.57px;top:871.23px;font-size:18.3px;color:#4d4d4d;transform:scaleX(0.9032);transform-origin:0 0;">2.2.DSP</div>
<svg style="left:388.2px;top:913.1999999999999px" width="24" height="21" viewBox="0 0 24 21"><path d="M1 4 a3 3 0 0 1 3-3 h5 l3 3 h8 a3 3 0 0 1 3 3 v10 a3 3 0 0 1-3 3 H4 a3 3 0 0 1-3-3z" stroke="#666" stroke-width="1.9" fill="none" stroke-linejoin="round"/></svg>
<div class="t" style="left:420.57px;top:915.01px;font-size:18.3px;color:#4d4d4d;transform:scaleX(0.9032);transform-origin:0 0;">2.3.DPS</div>
<svg style="left:388.2px;top:956.98px" width="24" height="21" viewBox="0 0 24 21"><path d="M1 4 a3 3 0 0 1 3-3 h5 l3 3 h8 a3 3 0 0 1 3 3 v10 a3 3 0 0 1-3 3 H4 a3 3 0 0 1-3-3z" stroke="#666" stroke-width="1.9" fill="none" stroke-linejoin="round"/></svg>
<div class="t" style="left:420.56px;top:958.79px;font-size:18.3px;color:#4d4d4d;transform:scaleX(0.9204);transform-origin:0 0;">2.4.VIZUALIZA…</div>
<svg style="left:388.2px;top:1000.76px" width="24" height="21" viewBox="0 0 24 21"><path d="M1 4 a3 3 0 0 1 3-3 h5 l3 3 h8 a3 3 0 0 1 3 3 v10 a3 3 0 0 1-3 3 H4 a3 3 0 0 1-3-3z" stroke="#666" stroke-width="1.9" fill="none" stroke-linejoin="round"/></svg>
<div class="t" style="left:420.60px;top:1002.57px;font-size:18.3px;color:#4d4d4d;transform:scaleX(0.8779);transform-origin:0 0;">2.5.GEODET</div>
<svg style="left:388.2px;top:1044.54px" width="24" height="21" viewBox="0 0 24 21"><path d="M1 4 a3 3 0 0 1 3-3 h5 l3 3 h8 a3 3 0 0 1 3 3 v10 a3 3 0 0 1-3 3 H4 a3 3 0 0 1-3-3z" stroke="#666" stroke-width="1.9" fill="none" stroke-linejoin="round"/></svg>
<div class="t" style="left:420.61px;top:1046.35px;font-size:18.3px;color:#4d4d4d;transform:scaleX(0.8632);transform-origin:0 0;">2.6.VZORKOVÁ…</div>
<svg style="left:388.2px;top:1088.3200000000002px" width="24" height="21" viewBox="0 0 24 21"><path d="M1 4 a3 3 0 0 1 3-3 h5 l3 3 h8 a3 3 0 0 1 3 3 v10 a3 3 0 0 1-3 3 H4 a3 3 0 0 1-3-3z" stroke="#666" stroke-width="1.9" fill="none" stroke-linejoin="round"/></svg>
<div class="t" style="left:420.61px;top:1090.13px;font-size:18.3px;color:#4d4d4d;transform:scaleX(0.8681);transform-origin:0 0;">2.7.ANALÝZY</div>
<svg style="left:327.1px;top:1136.4px" width="9" height="13.5" viewBox="0 0 9 13.5"><path d="M1 1 L7.8 6.75 L1 12.5" stroke="#3c3c3c" stroke-width="1.9" fill="none"/></svg>
<svg style="left:353.6px;top:1132.1000000000001px" width="24" height="21" viewBox="0 0 24 21"><path d="M1 4 a3 3 0 0 1 3-3 h5 l3 3 h8 a3 3 0 0 1 3 3 v10 a3 3 0 0 1-3 3 H4 a3 3 0 0 1-3-3z" stroke="#666" stroke-width="1.9" fill="none" stroke-linejoin="round"/></svg>
<div class="t" style="left:386.95px;top:1133.91px;font-size:18.3px;color:#4d4d4d;transform:scaleX(0.8889);transform-origin:0 0;">3.POPTÁVKY_NABÍ…</div>
<svg style="left:327.1px;top:1180.18px" width="9" height="13.5" viewBox="0 0 9 13.5"><path d="M1 1 L7.8 6.75 L1 12.5" stroke="#3c3c3c" stroke-width="1.9" fill="none"/></svg>
<svg style="left:353.6px;top:1175.88px" width="24" height="21" viewBox="0 0 24 21"><path d="M1 4 a3 3 0 0 1 3-3 h5 l3 3 h8 a3 3 0 0 1 3 3 v10 a3 3 0 0 1-3 3 H4 a3 3 0 0 1-3-3z" stroke="#666" stroke-width="1.9" fill="none" stroke-linejoin="round"/></svg>
<div class="t" style="left:387.28px;top:1177.69px;font-size:18.3px;color:#4d4d4d;transform:scaleX(0.8777);transform-origin:0 0;">4.SMLOUVY_OBJED…</div>
<svg style="left:327.1px;top:1223.96px" width="9" height="13.5" viewBox="0 0 9 13.5"><path d="M1 1 L7.8 6.75 L1 12.5" stroke="#3c3c3c" stroke-width="1.9" fill="none"/></svg>
<svg style="left:353.6px;top:1219.66px" width="24" height="21" viewBox="0 0 24 21"><path d="M1 4 a3 3 0 0 1 3-3 h5 l3 3 h8 a3 3 0 0 1 3 3 v10 a3 3 0 0 1-3 3 H4 a3 3 0 0 1-3-3z" stroke="#666" stroke-width="1.9" fill="none" stroke-linejoin="round"/></svg>
<div class="t" style="left:386.93px;top:1221.47px;font-size:18.3px;color:#4d4d4d;transform:scaleX(0.9173);transform-origin:0 0;">5.ZÁZNAMY</div>
<div class="a" style="left:650px;top:377px;width:70px;height:45px;border-radius:3px;background:#0696d7"></div>
<svg style="left:671px;top:388px" width="28" height="22" viewBox="0 0 28 22"><path d="M6.8 19.7 A6 6 0 0 1 8.05 7.83 A9.5 9.5 0 1 1 20.9 18.8" stroke="#fff" stroke-width="2" fill="none" stroke-linecap="round"/><path d="M14 21 V10.6 M9.7 14.9 L14 10.6 L18.3 14.9" stroke="#fff" stroke-width="2" fill="none"/></svg>
<svg style="left:740px;top:388px" width="25" height="22" viewBox="0 0 25 22"><path d="M1.2 9.9 V4.5 a3.3 3.3 0 0 1 3.3-3.3 H11 L13.5 4.4 H19.8 a3.3 3.3 0 0 1 3.3 3.3 V17 a3.3 3.3 0 0 1-3.3 3.3 H13.3" stroke="#1f6fb2" stroke-width="2" fill="none"/><path d="M0.5 17.2 H10.2 M6.2 13.2 L10.2 17.2 L6.2 21.2" stroke="#1f6fb2" stroke-width="2" fill="none"/></svg>
<div class="a" style="left:787px;top:387px;width:1px;height:25px;background:#d0d0d0;"></div>
<svg style="left:812.5px;top:390px" width="5" height="18" viewBox="0 0 5 18"><circle cx="2.4" cy="1.3" r="1.9" fill="#3d6bb8"/><circle cx="2.4" cy="8.9" r="1.9" fill="#3d6bb8"/><circle cx="2.4" cy="16.4" r="1.9" fill="#3d6bb8"/></svg>
<div class="a" style="left:650px;top:464px;width:20px;height:20px;border-radius:2.5px;background:#0696d7"></div>
<div class="a" style="left:654px;top:473px;width:12px;height:2.2px;background:#fff;"></div>
<div class="t" style="left:689.88px;top:466.39px;font-size:17.5px;color:#3c3c3c;font-weight:bold;">Name</div>
<svg style="left:750.3px;top:466px" width="15.4" height="16" viewBox="0 0 15.4 16"><path d="M7.7 16 V1.5 M1 8 L7.7 1.3 L14.4 8" stroke="#3c3c3c" stroke-width="1.9" fill="none"/></svg>
<div class="a" style="left:630px;top:502.5px;width:310px;height:1px;background:#e0e0e0;"></div>
<div class="a" style="left:650px;top:524px;width:20px;height:20px;border-radius:2.5px;border:1px solid #9a9a9a;background:#fff"></div>
<svg style="left:692px;top:520.7px" width="26" height="26.5" viewBox="0 0 26 26.5"><path d="M5.3 0.4 H18.5 L25.6 7.2 V26 H5.3 Z" fill="#f9f9f9" stroke="#c2c2c2" stroke-width="0.9"/><path d="M18.5 0.4 V7.2 H25.6" fill="#eeeeee" stroke="#c2c2c2" stroke-width="0.9"/><circle cx="16.1" cy="9.2" r="5" fill="#d2d2d2"/><path d="M16.6 4.2 A5 5 0 0 1 21.1 8.7 H16.6 Z" fill="#f6b393"/><path d="M12 19.2 H23.6 M12 21.3 H23.6 M12 23.4 H23.6" stroke="#d4d4d4" stroke-width="0.9"/><path d="M0.3 8.6 L13 7.1 V23.3 L0.3 21.5 Z" fill="#c8472a"/><text x="6.5" y="19.3" font-size="11.5" font-weight="bold" font-family="Liberation Sans" fill="#fff" text-anchor="middle">P</text></svg>
<div class="t" style="left:725.50px;top:525.49px;font-size:18.2px;color:#4d4d4d;">Autodesk Docs.pptx</div>
<div class="a" style="left:630px;top:562.5px;width:310px;height:1px;background:#e3e8ec;"></div>
<div class="a" style="left:630px;top:563px;width:310px;height:60px;background:#eaf4fb;"></div>
<div class="a" style="left:630px;top:622.5px;width:310px;height:1px;background:#e1e8ee;"></div>
<div class="a" style="left:650px;top:584px;width:20px;height:20px;border-radius:2.5px;background:#0696d7"></div>
<svg style="left:653px;top:588px" width="14" height="12" viewBox="0 0 14 12"><path d="M1.5 6 L5.5 10 L12.5 2" stroke="#fff" stroke-width="2.2" fill="none"/></svg>
<svg style="left:692.8px;top:579.8px" width="24.5" height="28.3" viewBox="0 0 24.5 28.3"><path d="M0 0 H17.7 L24.2 6.5 V28.2 H0 Z" fill="#5d7ca3"/><path d="M17.7 0 L24.2 6.5 H17.7 Z" fill="#8fb1d9"/><path d="M17.7 6.5 H24.2 V10.5 Z" fill="#4a678e"/><rect x="4.6" y="7.7" width="15.3" height="14.2" fill="none" stroke="#c9d5e5" stroke-width="1.5"/><rect x="4.6" y="18.8" width="15.3" height="3.1" fill="#fff"/><path d="M6.3 18.9 L11.3 13 L15.6 18.9 Z" fill="#fff"/><circle cx="16.1" cy="10.6" r="1.25" fill="#fff"/></svg>
<div class="t" style="left:724.64px;top:586.13px;font-size:17.8px;color:#4d4d4d;transform:scaleX(0.9690);transform-origin:0 0;">CF2023-reklama-SQ.…</div>
<div class="a" style="left:630px;top:1184px;width:310px;height:21px;background:#f1f1f1;"></div>
<div class="a" style="left:651px;top:1186.3px;width:289px;height:16.5px;background:#c1c1c1;"></div>
<div class="a" style="left:630px;top:1205px;width:310px;height:1px;background:#e3e3e3;"></div>
<svg style="left:638px;top:1190px" width="5.5" height="9.5" viewBox="0 0 5.5 9.5"><path d="M5.5 0 L0 4.75 L5.5 9.5Z" fill="#a3a3a3"/></svg>
<div class="t" style="left:638.55px;top:1221.16px;font-size:18px;color:#666;transform:scaleX(1.0072);transform-origin:0 0;">1 of 2 selected</div>
<div class="a" style="left:928px;top:191px;width:12px;height:1063px;background:linear-gradient(90deg,rgba(0,0,0,0),rgba(0,0,0,0.045))"></div>
<div class="a" style="left:940px;top:191px;width:750px;height:1063px;background:#fff;border-left:1px solid #d3d9e0;border-right:1px solid #d5d5d5"></div>
<div class="a" style="left:1690px;top:0px;width:1px;height:1254px;background:#cfcfcf;"></div>
<div class="t" style="left:960.81px;top:217.93px;font-size:23px;color:#3c3c3c;transform:scaleX(1.0810);transform-origin:0 0;">File activities -</div>
<svg style="left:1131.7px;top:214.8px" width="24.5" height="28.3" viewBox="0 0 24.5 28.3"><path d="M0 0 H17.7 L24.2 6.5 V28.2 H0 Z" fill="#5d7ca3"/><path d="M17.7 0 L24.2 6.5 H17.7 Z" fill="#8fb1d9"/><path d="M17.7 6.5 H24.2 V10.5 Z" fill="#4a678e"/><rect x="4.6" y="7.7" width="15.3" height="14.2" fill="none" stroke="#c9d5e5" stroke-width="1.5"/><rect x="4.6" y="18.8" width="15.3" height="3.1" fill="#fff"/><path d="M6.3 18.9 L11.3 13 L15.6 18.9 Z" fill="#fff"/><circle cx="16.1" cy="10.6" r="1.25" fill="#fff"/></svg>
<div class="t" style="left:1164.45px;top:218.13px;font-size:23px;color:#3c3c3c;">CF2023-reklama-SQ.png</div>
<svg style="left:1647.5px;top:218.2px" width="17" height="17" viewBox="0 0 17 17"><path d="M1 1 L16 16 M16 1 L1 16" stroke="#505050" stroke-width="1.7"/></svg>
<svg style="left:955px;top:260px" width="80" height="40" viewBox="0 0 80 40"><path d="M26 6.2 C22 7.5 21 11 23 13.5 C25 16 31 19 30.7 23 C30.4 26.5 26 27 22.5 23.5 C19.5 20 17 13 12 11.8 C8 11 7 15.5 10 19.5 C12.5 22.5 18 25 17 29 C16.5 31 14.5 31.5 13.2 31.5" stroke="#b8b8b8" stroke-width="1.7" fill="none" stroke-linecap="round"/><path d="M51.6 25 L49.2 14.2 L53.9 17.5 L56.8 10.4 L61 16.1 L65 10.4 L67.6 17.5 L72.4 14.2 L70.3 25" stroke="#b8b8b8" stroke-width="1.7" fill="none" stroke-linejoin="round"/><ellipse cx="61" cy="25" rx="9.4" ry="2.7" stroke="#b8b8b8" stroke-width="1.6" fill="none"/></svg>
<div class="a" style="left:941px;top:314px;width:749px;height:1px;background:#dcdcdc;"></div>
<div class="a" style="left:961px;top:335px;width:129px;height:45px;border:1px solid #ababab;border-radius:2px"></div>
<svg style="left:981px;top:347px" width="22" height="21" viewBox="0 0 22 21"><path d="M8 1.9 H5.3 a4.3 4.3 0 0 0-4.3 4.3 V15.5 a4.3 4.3 0 0 0 4.3 4.3 H14.6 a4.3 4.3 0 0 0 4.3-4.3 V13.1" stroke="#595959" stroke-width="1.75" fill="none" stroke-linecap="round"/><path d="M5.8 15.2 C6.5 9 10.3 5.3 16.8 5.3 H20.2 M15.6 0.6 L20.3 5.3 L15.6 10" stroke="#595959" stroke-width="1.75" fill="none" stroke-linecap="round"/></svg>
<div class="t" style="left:1015.61px;top:347.56px;font-size:18px;color:#3c3c3c;transform:scaleX(1.0337);transform-origin:0 0;">Export</div>
<svg style="left:1570px;top:346.2px" width="24.2" height="24" viewBox="0 0 24.2 24"><path d="M2 1 H22.2 a1 1 0 0 1 0.8 1.6 L15 14.5 V21.5 a1.5 1.5 0 0 1-1.5 1.5 H10.7 a1.5 1.5 0 0 1-1.5-1.5 V14.5 L1.2 2.6 A1 1 0 0 1 2 1z" stroke="#0a6eb0" stroke-width="2" fill="none" stroke-linejoin="round"/></svg>
<div class="t" style="left:1607.02px;top:347.94px;font-size:18.5px;color:#0a6eb0;transform:scaleX(1.0684);transform-origin:0 0;">Filter</div>
<div class="a" style="left:941px;top:401px;width:749px;height:50px;background:#f5f5f5;"></div>
<div class="t" style="left:960.94px;top:416.56px;font-size:18px;color:#3c3c3c;transform:scaleX(0.9874);transform-origin:0 0;">Today</div>
<svg style="left:1648.3px;top:422.7px" width="15" height="8.5" viewBox="0 0 15 8.5"><path d="M1 7.6 L7.5 1.2 L14 7.6" stroke="#3c3c3c" stroke-width="1.9" fill="none"/></svg>
<div class="t" style="left:959.84px;top:476.32px;font-size:18.4px;color:#505050;transform:scaleX(0.9941);transform-origin:0 0;">Mar 11, 2023 8:20 AM</div>
<div class="t" style="left:1069.76px;top:511.76px;font-size:18.6px;color:#505050;transform:scaleX(1.0203);transform-origin:0 0">uploaded this file to the <b>current</b> folder.</div>
<svg style="left:959.2px;top:514.1px" width="104.6" height="14.7" viewBox="0 0 104.6 14.7"><rect x="0.00" y="0.00" width="5.20" height="5.20" fill="#d0d0d0"/><rect x="9.80" y="0.00" width="5.20" height="5.20" fill="#dcdcdc"/><rect x="14.70" y="0.00" width="5.20" height="5.20" fill="#f4f4f4"/><rect x="19.60" y="0.00" width="5.20" height="5.20" fill="#dcdcdc"/><rect x="24.50" y="0.00" width="5.20" height="5.20" fill="#ececec"/><rect x="34.30" y="0.00" width="5.20" height="5.20" fill="#d0d0d0"/><rect x="39.20" y="0.00" width="5.20" height="5.20" fill="#dcdcdc"/><rect x="44.10" y="0.00" width="5.20" height="5.20" fill="#ececec"/><rect x="53.90" y="0.00" width="5.20" height="5.20" fill="#ececec"/><rect x="58.80" y="0.00" width="5.20" height="5.20" fill="#d0d0d0"/><rect x="63.70" y="0.00" width="5.20" height="5.20" fill="#f4f4f4"/><rect x="68.60" y="0.00" width="5.20" height="5.20" fill="#f4f4f4"/><rect x="78.40" y="0.00" width="5.20" height="5.20" fill="#f4f4f4"/><rect x="83.30" y="0.00" width="5.20" height="5.20" fill="#f4f4f4"/><rect x="88.20" y="0.00" width="5.20" height="5.20" fill="#e4e4e4"/><rect x="93.10" y="0.00" width="5.20" height="5.20" fill="#b0b0b0"/><rect x="98.00" y="0.00" width="5.20" height="5.20" fill="#dcdcdc"/><rect x="0.00" y="4.90" width="5.20" height="5.20" fill="#8c8c8c"/><rect x="4.90" y="4.90" width="5.20" height="5.20" fill="#8c8c8c"/><rect x="9.80" y="4.90" width="5.20" height="5.20" fill="#d8d8d8"/><rect x="14.70" y="4.90" width="5.20" height="5.20" fill="#b0b0b0"/><rect x="19.60" y="4.90" width="5.20" height="5.20" fill="#c8c8c8"/><rect x="24.50" y="4.90" width="5.20" height="5.20" fill="#a8a8a8"/><rect x="29.40" y="4.90" width="5.20" height="5.20" fill="#a0a0a0"/><rect x="34.30" y="4.90" width="5.20" height="5.20" fill="#b0b0b0"/><rect x="39.20" y="4.90" width="5.20" height="5.20" fill="#d8d8d8"/><rect x="44.10" y="4.90" width="5.20" height="5.20" fill="#b8b8b8"/><rect x="53.90" y="4.90" width="5.20" height="5.20" fill="#c0c0c0"/><rect x="58.80" y="4.90" width="5.20" height="5.20" fill="#8c8c8c"/><rect x="63.70" y="4.90" width="5.20" height="5.20" fill="#c0c0c0"/><rect x="68.60" y="4.90" width="5.20" height="5.20" fill="#8c8c8c"/><rect x="73.50" y="4.90" width="5.20" height="5.20" fill="#8c8c8c"/><rect x="78.40" y="4.90" width="5.20" height="5.20" fill="#c8c8c8"/><rect x="83.30" y="4.90" width="5.20" height="5.20" fill="#8c8c8c"/><rect x="88.20" y="4.90" width="5.20" height="5.20" fill="#b8b8b8"/><rect x="93.10" y="4.90" width="5.20" height="5.20" fill="#c8c8c8"/><rect x="98.00" y="4.90" width="5.20" height="5.20" fill="#a0a0a0"/><rect x="0.00" y="9.80" width="5.20" height="5.20" fill="#c0c0c0"/><rect x="4.90" y="9.80" width="5.20" height="5.20" fill="#b0b0b0"/><rect x="9.80" y="9.80" width="5.20" height="5.20" fill="#c8c8c8"/><rect x="14.70" y="9.80" width="5.20" height="5.20" fill="#a8a8a8"/><rect x="19.60" y="9.80" width="5.20" height="5.20" fill="#b8b8b8"/><rect x="24.50" y="9.80" width="5.20" height="5.20" fill="#c0c0c0"/><rect x="29.40" y="9.80" width="5.20" height="5.20" fill="#c0c0c0"/><rect x="34.30" y="9.80" width="5.20" height="5.20" fill="#a8a8a8"/><rect x="39.20" y="9.80" width="5.20" height="5.20" fill="#a8a8a8"/><rect x="44.10" y="9.80" width="5.20" height="5.20" fill="#d8d8d8"/><rect x="53.90" y="9.80" width="5.20" height="5.20" fill="#d8d8d8"/><rect x="58.80" y="9.80" width="5.20" height="5.20" fill="#a8a8a8"/><rect x="63.70" y="9.80" width="5.20" height="5.20" fill="#c8c8c8"/><rect x="68.60" y="9.80" width="5.20" height="5.20" fill="#a8a8a8"/><rect x="73.50" y="9.80" width="5.20" height="5.20" fill="#8c8c8c"/><rect x="78.40" y="9.80" width="5.20" height="5.20" fill="#b0b0b0"/><rect x="83.30" y="9.80" width="5.20" height="5.20" fill="#a0a0a0"/><rect x="88.20" y="9.80" width="5.20" height="5.20" fill="#c0c0c0"/><rect x="93.10" y="9.80" width="5.20" height="5.20" fill="#8c8c8c"/><rect x="98.00" y="9.80" width="5.20" height="5.20" fill="#8c8c8c"/></svg>
<div class="t" style="left:959.90px;top:557.92px;font-size:18.4px;color:#505050;transform:scaleX(0.9511);transform-origin:0 0;">Mar 21, 2023 8:29 AM</div>
<div class="t" style="left:1096.10px;top:593.56px;font-size:18.6px;color:#505050;transform:scaleX(1.0335);transform-origin:0 0;">viewed this file.</div>
<svg style="left:959.2px;top:594px" width="134.2" height="19.5" viewBox="0 0 134.2 19.5"><rect x="0.00" y="0.00" width="5.20" height="5.20" fill="#b0b0b0"/><rect x="4.90" y="0.00" width="5.20" height="5.20" fill="#b0b0b0"/><rect x="9.80" y="0.00" width="5.20" height="5.20" fill="#b0b0b0"/><rect x="14.70" y="0.00" width="5.20" height="5.20" fill="#d0d0d0"/><rect x="24.50" y="0.00" width="5.20" height="5.20" fill="#ececec"/><rect x="29.40" y="0.00" width="5.20" height="5.20" fill="#ececec"/><rect x="39.20" y="0.00" width="5.20" height="5.20" fill="#ececec"/><rect x="44.10" y="0.00" width="5.20" height="5.20" fill="#f4f4f4"/><rect x="49.00" y="0.00" width="5.20" height="5.20" fill="#f4f4f4"/><rect x="58.80" y="0.00" width="5.20" height="5.20" fill="#dcdcdc"/><rect x="63.70" y="0.00" width="5.20" height="5.20" fill="#dcdcdc"/><rect x="73.50" y="0.00" width="5.20" height="5.20" fill="#ececec"/><rect x="78.40" y="0.00" width="5.20" height="5.20" fill="#dcdcdc"/><rect x="93.10" y="0.00" width="5.20" height="5.20" fill="#ececec"/><rect x="98.00" y="0.00" width="5.20" height="5.20" fill="#ececec"/><rect x="102.90" y="0.00" width="5.20" height="5.20" fill="#e4e4e4"/><rect x="107.80" y="0.00" width="5.20" height="5.20" fill="#ececec"/><rect x="112.70" y="0.00" width="5.20" height="5.20" fill="#b0b0b0"/><rect x="117.60" y="0.00" width="5.20" height="5.20" fill="#ececec"/><rect x="122.50" y="0.00" width="5.20" height="5.20" fill="#b0b0b0"/><rect x="0.00" y="4.90" width="5.20" height="5.20" fill="#8c8c8c"/><rect x="4.90" y="4.90" width="5.20" height="5.20" fill="#c0c0c0"/><rect x="9.80" y="4.90" width="5.20" height="5.20" fill="#a0a0a0"/><rect x="14.70" y="4.90" width="5.20" height="5.20" fill="#c8c8c8"/><rect x="19.60" y="4.90" width="5.20" height="5.20" fill="#8c8c8c"/><rect x="24.50" y="4.90" width="5.20" height="5.20" fill="#b0b0b0"/><rect x="29.40" y="4.90" width="5.20" height="5.20" fill="#b0b0b0"/><rect x="34.30" y="4.90" width="5.20" height="5.20" fill="#c0c0c0"/><rect x="39.20" y="4.90" width="5.20" height="5.20" fill="#a8a8a8"/><rect x="44.10" y="4.90" width="5.20" height="5.20" fill="#c8c8c8"/><rect x="49.00" y="4.90" width="5.20" height="5.20" fill="#c0c0c0"/><rect x="58.80" y="4.90" width="5.20" height="5.20" fill="#a0a0a0"/><rect x="63.70" y="4.90" width="5.20" height="5.20" fill="#c8c8c8"/><rect x="68.60" y="4.90" width="5.20" height="5.20" fill="#a8a8a8"/><rect x="73.50" y="4.90" width="5.20" height="5.20" fill="#c0c0c0"/><rect x="78.40" y="4.90" width="5.20" height="5.20" fill="#c8c8c8"/><rect x="83.30" y="4.90" width="5.20" height="5.20" fill="#c0c0c0"/><rect x="88.20" y="4.90" width="5.20" height="5.20" fill="#d8d8d8"/><rect x="93.10" y="4.90" width="5.20" height="5.20" fill="#c8c8c8"/><rect x="98.00" y="4.90" width="5.20" height="5.20" fill="#b0b0b0"/><rect x="102.90" y="4.90" width="5.20" height="5.20" fill="#d8d8d8"/><rect x="107.80" y="4.90" width="5.20" height="5.20" fill="#d8d8d8"/><rect x="112.70" y="4.90" width="5.20" height="5.20" fill="#b0b0b0"/><rect x="117.60" y="4.90" width="5.20" height="5.20" fill="#a0a0a0"/><rect x="122.50" y="4.90" width="5.20" height="5.20" fill="#c0c0c0"/><rect x="127.40" y="4.90" width="5.20" height="5.20" fill="#a0a0a0"/><rect x="0.00" y="9.80" width="5.20" height="5.20" fill="#c8c8c8"/><rect x="4.90" y="9.80" width="5.20" height="5.20" fill="#8c8c8c"/><rect x="9.80" y="9.80" width="5.20" height="5.20" fill="#a0a0a0"/><rect x="14.70" y="9.80" width="5.20" height="5.20" fill="#8c8c8c"/><rect x="19.60" y="9.80" width="5.20" height="5.20" fill="#c8c8c8"/><rect x="24.50" y="9.80" width="5.20" height="5.20" fill="#8c8c8c"/><rect x="29.40" y="9.80" width="5.20" height="5.20" fill="#a0a0a0"/><rect x="34.30" y="9.80" width="5.20" height="5.20" fill="#d8d8d8"/><rect x="39.20" y="9.80" width="5.20" height="5.20" fill="#a0a0a0"/><rect x="44.10" y="9.80" width="5.20" height="5.20" fill="#b0b0b0"/><rect x="49.00" y="9.80" width="5.20" height="5.20" fill="#b8b8b8"/><rect x="58.80" y="9.80" width="5.20" height="5.20" fill="#a8a8a8"/><rect x="63.70" y="9.80" width="5.20" height="5.20" fill="#b8b8b8"/><rect x="68.60" y="9.80" width="5.20" height="5.20" fill="#d8d8d8"/><rect x="73.50" y="9.80" width="5.20" height="5.20" fill="#c8c8c8"/><rect x="78.40" y="9.80" width="5.20" height="5.20" fill="#c8c8c8"/><rect x="83.30" y="9.80" width="5.20" height="5.20" fill="#c0c0c0"/><rect x="88.20" y="9.80" width="5.20" height="5.20" fill="#d8d8d8"/><rect x="93.10" y="9.80" width="5.20" height="5.20" fill="#a8a8a8"/><rect x="98.00" y="9.80" width="5.20" height="5.20" fill="#c8c8c8"/><rect x="102.90" y="9.80" width="5.20" height="5.20" fill="#c0c0c0"/><rect x="107.80" y="9.80" width="5.20" height="5.20" fill="#a0a0a0"/><rect x="112.70" y="9.80" width="5.20" height="5.20" fill="#8c8c8c"/><rect x="117.60" y="9.80" width="5.20" height="5.20" fill="#a8a8a8"/><rect x="122.50" y="9.80" width="5.20" height="5.20" fill="#b8b8b8"/><rect x="127.40" y="9.80" width="5.20" height="5.20" fill="#c8c8c8"/><rect x="0.00" y="14.70" width="5.20" height="5.20" fill="#e4e4e4"/><rect x="4.90" y="14.70" width="5.20" height="5.20" fill="#e4e4e4"/><rect x="9.80" y="14.70" width="5.20" height="5.20" fill="#b0b0b0"/><rect x="14.70" y="14.70" width="5.20" height="5.20" fill="#e4e4e4"/><rect x="19.60" y="14.70" width="5.20" height="5.20" fill="#e4e4e4"/><rect x="39.20" y="14.70" width="5.20" height="5.20" fill="#dcdcdc"/><rect x="58.80" y="14.70" width="5.20" height="5.20" fill="#d0d0d0"/><rect x="63.70" y="14.70" width="5.20" height="5.20" fill="#f4f4f4"/><rect x="68.60" y="14.70" width="5.20" height="5.20" fill="#d0d0d0"/><rect x="73.50" y="14.70" width="5.20" height="5.20" fill="#e4e4e4"/><rect x="78.40" y="14.70" width="5.20" height="5.20" fill="#dcdcdc"/><rect x="88.20" y="14.70" width="5.20" height="5.20" fill="#b0b0b0"/><rect x="98.00" y="14.70" width="5.20" height="5.20" fill="#ececec"/><rect x="107.80" y="14.70" width="5.20" height="5.20" fill="#ececec"/><rect x="112.70" y="14.70" width="5.20" height="5.20" fill="#dcdcdc"/><rect x="122.50" y="14.70" width="5.20" height="5.20" fill="#ececec"/></svg>
<div class="t" style="left:961.30px;top:640.52px;font-size:18.4px;color:#505050;transform:scaleX(0.9433);transform-origin:0 0;">Aug 18, 2023 11:20 AM</div>
<div class="t" style="left:1085.86px;top:675.76px;font-size:18.6px;color:#505050;transform:scaleX(1.0183);transform-origin:0 0">uploaded this file to the <b>current</b> folder.</div>
<svg style="left:959.2px;top:674.1px" width="125" height="19.8" viewBox="0 0 125 19.8"><rect x="0.00" y="0.00" width="5.20" height="5.20" fill="#e4e4e4"/><rect x="4.90" y="0.00" width="5.20" height="5.20" fill="#ececec"/><rect x="9.80" y="0.00" width="5.20" height="5.20" fill="#f4f4f4"/><rect x="14.70" y="0.00" width="5.20" height="5.20" fill="#dcdcdc"/><rect x="19.60" y="0.00" width="5.20" height="5.20" fill="#f4f4f4"/><rect x="24.50" y="0.00" width="5.20" height="5.20" fill="#d0d0d0"/><rect x="29.40" y="0.00" width="5.20" height="5.20" fill="#b0b0b0"/><rect x="34.30" y="0.00" width="5.20" height="5.20" fill="#b0b0b0"/><rect x="39.20" y="0.00" width="5.20" height="5.20" fill="#b0b0b0"/><rect x="44.10" y="0.00" width="5.20" height="5.20" fill="#ececec"/><rect x="49.00" y="0.00" width="5.20" height="5.20" fill="#f4f4f4"/><rect x="58.80" y="0.00" width="5.20" height="5.20" fill="#d0d0d0"/><rect x="73.50" y="0.00" width="5.20" height="5.20" fill="#b0b0b0"/><rect x="78.40" y="0.00" width="5.20" height="5.20" fill="#e4e4e4"/><rect x="83.30" y="0.00" width="5.20" height="5.20" fill="#ececec"/><rect x="88.20" y="0.00" width="5.20" height="5.20" fill="#dcdcdc"/><rect x="93.10" y="0.00" width="5.20" height="5.20" fill="#e4e4e4"/><rect x="98.00" y="0.00" width="5.20" height="5.20" fill="#dcdcdc"/><rect x="102.90" y="0.00" width="5.20" height="5.20" fill="#f4f4f4"/><rect x="112.70" y="0.00" width="5.20" height="5.20" fill="#dcdcdc"/><rect x="122.50" y="0.00" width="5.20" height="5.20" fill="#dcdcdc"/><rect x="0.00" y="4.90" width="5.20" height="5.20" fill="#b0b0b0"/><rect x="4.90" y="4.90" width="5.20" height="5.20" fill="#a0a0a0"/><rect x="9.80" y="4.90" width="5.20" height="5.20" fill="#b8b8b8"/><rect x="14.70" y="4.90" width="5.20" height="5.20" fill="#8c8c8c"/><rect x="19.60" y="4.90" width="5.20" height="5.20" fill="#a8a8a8"/><rect x="24.50" y="4.90" width="5.20" height="5.20" fill="#a0a0a0"/><rect x="29.40" y="4.90" width="5.20" height="5.20" fill="#a8a8a8"/><rect x="34.30" y="4.90" width="5.20" height="5.20" fill="#b8b8b8"/><rect x="39.20" y="4.90" width="5.20" height="5.20" fill="#b8b8b8"/><rect x="44.10" y="4.90" width="5.20" height="5.20" fill="#c8c8c8"/><rect x="49.00" y="4.90" width="5.20" height="5.20" fill="#a0a0a0"/><rect x="53.90" y="4.90" width="5.20" height="5.20" fill="#a8a8a8"/><rect x="58.80" y="4.90" width="5.20" height="5.20" fill="#b0b0b0"/><rect x="63.70" y="4.90" width="5.20" height="5.20" fill="#a0a0a0"/><rect x="73.50" y="4.90" width="5.20" height="5.20" fill="#a8a8a8"/><rect x="78.40" y="4.90" width="5.20" height="5.20" fill="#d8d8d8"/><rect x="83.30" y="4.90" width="5.20" height="5.20" fill="#b8b8b8"/><rect x="88.20" y="4.90" width="5.20" height="5.20" fill="#8c8c8c"/><rect x="93.10" y="4.90" width="5.20" height="5.20" fill="#a8a8a8"/><rect x="98.00" y="4.90" width="5.20" height="5.20" fill="#8c8c8c"/><rect x="102.90" y="4.90" width="5.20" height="5.20" fill="#b8b8b8"/><rect x="107.80" y="4.90" width="5.20" height="5.20" fill="#a8a8a8"/><rect x="112.70" y="4.90" width="5.20" height="5.20" fill="#b0b0b0"/><rect x="117.60" y="4.90" width="5.20" height="5.20" fill="#b0b0b0"/><rect x="122.50" y="4.90" width="5.20" height="5.20" fill="#a0a0a0"/><rect x="0.00" y="9.80" width="5.20" height="5.20" fill="#a0a0a0"/><rect x="4.90" y="9.80" width="5.20" height="5.20" fill="#c0c0c0"/><rect x="9.80" y="9.80" width="5.20" height="5.20" fill="#b0b0b0"/><rect x="14.70" y="9.80" width="5.20" height="5.20" fill="#c0c0c0"/><rect x="19.60" y="9.80" width="5.20" height="5.20" fill="#a0a0a0"/><rect x="24.50" y="9.80" width="5.20" height="5.20" fill="#a8a8a8"/><rect x="29.40" y="9.80" width="5.20" height="5.20" fill="#8c8c8c"/><rect x="34.30" y="9.80" width="5.20" height="5.20" fill="#b8b8b8"/><rect x="39.20" y="9.80" width="5.20" height="5.20" fill="#b0b0b0"/><rect x="44.10" y="9.80" width="5.20" height="5.20" fill="#a0a0a0"/><rect x="49.00" y="9.80" width="5.20" height="5.20" fill="#c8c8c8"/><rect x="53.90" y="9.80" width="5.20" height="5.20" fill="#a8a8a8"/><rect x="58.80" y="9.80" width="5.20" height="5.20" fill="#c8c8c8"/><rect x="63.70" y="9.80" width="5.20" height="5.20" fill="#a8a8a8"/><rect x="73.50" y="9.80" width="5.20" height="5.20" fill="#c8c8c8"/><rect x="78.40" y="9.80" width="5.20" height="5.20" fill="#d8d8d8"/><rect x="83.30" y="9.80" width="5.20" height="5.20" fill="#b8b8b8"/><rect x="88.20" y="9.80" width="5.20" height="5.20" fill="#8c8c8c"/><rect x="93.10" y="9.80" width="5.20" height="5.20" fill="#b8b8b8"/><rect x="98.00" y="9.80" width="5.20" height="5.20" fill="#a0a0a0"/><rect x="102.90" y="9.80" width="5.20" height="5.20" fill="#8c8c8c"/><rect x="107.80" y="9.80" width="5.20" height="5.20" fill="#c8c8c8"/><rect x="112.70" y="9.80" width="5.20" height="5.20" fill="#a0a0a0"/><rect x="117.60" y="9.80" width="5.20" height="5.20" fill="#8c8c8c"/><rect x="122.50" y="9.80" width="5.20" height="5.20" fill="#a8a8a8"/><rect x="0.00" y="14.70" width="5.20" height="5.20" fill="#dcdcdc"/><rect x="4.90" y="14.70" width="5.20" height="5.20" fill="#f4f4f4"/><rect x="9.80" y="14.70" width="5.20" height="5.20" fill="#e4e4e4"/><rect x="19.60" y="14.70" width="5.20" height="5.20" fill="#f4f4f4"/><rect x="24.50" y="14.70" width="5.20" height="5.20" fill="#d0d0d0"/><rect x="29.40" y="14.70" width="5.20" height="5.20" fill="#dcdcdc"/><rect x="34.30" y="14.70" width="5.20" height="5.20" fill="#ececec"/><rect x="39.20" y="14.70" width="5.20" height="5.20" fill="#f4f4f4"/><rect x="44.10" y="14.70" width="5.20" height="5.20" fill="#ececec"/><rect x="53.90" y="14.70" width="5.20" height="5.20" fill="#d0d0d0"/><rect x="58.80" y="14.70" width="5.20" height="5.20" fill="#d0d0d0"/><rect x="63.70" y="14.70" width="5.20" height="5.20" fill="#b0b0b0"/><rect x="73.50" y="14.70" width="5.20" height="5.20" fill="#b0b0b0"/><rect x="78.40" y="14.70" width="5.20" height="5.20" fill="#e4e4e4"/><rect x="88.20" y="14.70" width="5.20" height="5.20" fill="#ececec"/><rect x="93.10" y="14.70" width="5.20" height="5.20" fill="#ececec"/><rect x="98.00" y="14.70" width="5.20" height="5.20" fill="#d0d0d0"/><rect x="112.70" y="14.70" width="5.20" height="5.20" fill="#dcdcdc"/><rect x="117.60" y="14.70" width="5.20" height="5.20" fill="#f4f4f4"/><rect x="122.50" y="14.70" width="5.20" height="5.20" fill="#e4e4e4"/></svg>
<div class="t" style="left:961.30px;top:723.32px;font-size:18.4px;color:#505050;transform:scaleX(0.9438);transform-origin:0 0;">Aug 18, 2023 11:29 AM</div>
<div class="t" style="left:1085.86px;top:758.56px;font-size:18.6px;color:#505050;transform:scaleX(1.0183);transform-origin:0 0">uploaded this file to the <b>current</b> folder.</div>
<svg style="left:959.2px;top:759px" width="125" height="19.2" viewBox="0 0 125 19.2"><rect x="0.00" y="0.00" width="5.20" height="5.20" fill="#b0b0b0"/><rect x="4.90" y="0.00" width="5.20" height="5.20" fill="#ececec"/><rect x="9.80" y="0.00" width="5.20" height="5.20" fill="#b0b0b0"/><rect x="19.60" y="0.00" width="5.20" height="5.20" fill="#b0b0b0"/><rect x="34.30" y="0.00" width="5.20" height="5.20" fill="#b0b0b0"/><rect x="39.20" y="0.00" width="5.20" height="5.20" fill="#dcdcdc"/><rect x="49.00" y="0.00" width="5.20" height="5.20" fill="#f4f4f4"/><rect x="53.90" y="0.00" width="5.20" height="5.20" fill="#ececec"/><rect x="63.70" y="0.00" width="5.20" height="5.20" fill="#e4e4e4"/><rect x="73.50" y="0.00" width="5.20" height="5.20" fill="#b0b0b0"/><rect x="78.40" y="0.00" width="5.20" height="5.20" fill="#ececec"/><rect x="83.30" y="0.00" width="5.20" height="5.20" fill="#e4e4e4"/><rect x="88.20" y="0.00" width="5.20" height="5.20" fill="#ececec"/><rect x="93.10" y="0.00" width="5.20" height="5.20" fill="#d0d0d0"/><rect x="98.00" y="0.00" width="5.20" height="5.20" fill="#dcdcdc"/><rect x="102.90" y="0.00" width="5.20" height="5.20" fill="#dcdcdc"/><rect x="107.80" y="0.00" width="5.20" height="5.20" fill="#b0b0b0"/><rect x="117.60" y="0.00" width="5.20" height="5.20" fill="#b0b0b0"/><rect x="122.50" y="0.00" width="5.20" height="5.20" fill="#b0b0b0"/><rect x="0.00" y="4.90" width="5.20" height="5.20" fill="#d8d8d8"/><rect x="4.90" y="4.90" width="5.20" height="5.20" fill="#b0b0b0"/><rect x="9.80" y="4.90" width="5.20" height="5.20" fill="#d8d8d8"/><rect x="14.70" y="4.90" width="5.20" height="5.20" fill="#d8d8d8"/><rect x="19.60" y="4.90" width="5.20" height="5.20" fill="#b0b0b0"/><rect x="24.50" y="4.90" width="5.20" height="5.20" fill="#c0c0c0"/><rect x="29.40" y="4.90" width="5.20" height="5.20" fill="#b8b8b8"/><rect x="34.30" y="4.90" width="5.20" height="5.20" fill="#b0b0b0"/><rect x="39.20" y="4.90" width="5.20" height="5.20" fill="#c8c8c8"/><rect x="44.10" y="4.90" width="5.20" height="5.20" fill="#c0c0c0"/><rect x="49.00" y="4.90" width="5.20" height="5.20" fill="#c8c8c8"/><rect x="53.90" y="4.90" width="5.20" height="5.20" fill="#d8d8d8"/><rect x="58.80" y="4.90" width="5.20" height="5.20" fill="#c0c0c0"/><rect x="63.70" y="4.90" width="5.20" height="5.20" fill="#c0c0c0"/><rect x="73.50" y="4.90" width="5.20" height="5.20" fill="#8c8c8c"/><rect x="78.40" y="4.90" width="5.20" height="5.20" fill="#b0b0b0"/><rect x="83.30" y="4.90" width="5.20" height="5.20" fill="#d8d8d8"/><rect x="88.20" y="4.90" width="5.20" height="5.20" fill="#b8b8b8"/><rect x="93.10" y="4.90" width="5.20" height="5.20" fill="#b8b8b8"/><rect x="98.00" y="4.90" width="5.20" height="5.20" fill="#b8b8b8"/><rect x="102.90" y="4.90" width="5.20" height="5.20" fill="#c8c8c8"/><rect x="107.80" y="4.90" width="5.20" height="5.20" fill="#b0b0b0"/><rect x="112.70" y="4.90" width="5.20" height="5.20" fill="#a8a8a8"/><rect x="117.60" y="4.90" width="5.20" height="5.20" fill="#8c8c8c"/><rect x="122.50" y="4.90" width="5.20" height="5.20" fill="#d8d8d8"/><rect x="0.00" y="9.80" width="5.20" height="5.20" fill="#8c8c8c"/><rect x="4.90" y="9.80" width="5.20" height="5.20" fill="#a0a0a0"/><rect x="9.80" y="9.80" width="5.20" height="5.20" fill="#8c8c8c"/><rect x="14.70" y="9.80" width="5.20" height="5.20" fill="#a0a0a0"/><rect x="19.60" y="9.80" width="5.20" height="5.20" fill="#b8b8b8"/><rect x="24.50" y="9.80" width="5.20" height="5.20" fill="#b0b0b0"/><rect x="29.40" y="9.80" width="5.20" height="5.20" fill="#d8d8d8"/><rect x="34.30" y="9.80" width="5.20" height="5.20" fill="#d8d8d8"/><rect x="39.20" y="9.80" width="5.20" height="5.20" fill="#c0c0c0"/><rect x="44.10" y="9.80" width="5.20" height="5.20" fill="#b0b0b0"/><rect x="49.00" y="9.80" width="5.20" height="5.20" fill="#8c8c8c"/><rect x="53.90" y="9.80" width="5.20" height="5.20" fill="#c0c0c0"/><rect x="58.80" y="9.80" width="5.20" height="5.20" fill="#c8c8c8"/><rect x="63.70" y="9.80" width="5.20" height="5.20" fill="#b8b8b8"/><rect x="73.50" y="9.80" width="5.20" height="5.20" fill="#c8c8c8"/><rect x="78.40" y="9.80" width="5.20" height="5.20" fill="#b0b0b0"/><rect x="83.30" y="9.80" width="5.20" height="5.20" fill="#b8b8b8"/><rect x="88.20" y="9.80" width="5.20" height="5.20" fill="#d8d8d8"/><rect x="93.10" y="9.80" width="5.20" height="5.20" fill="#b8b8b8"/><rect x="98.00" y="9.80" width="5.20" height="5.20" fill="#a0a0a0"/><rect x="102.90" y="9.80" width="5.20" height="5.20" fill="#a0a0a0"/><rect x="107.80" y="9.80" width="5.20" height="5.20" fill="#c8c8c8"/><rect x="112.70" y="9.80" width="5.20" height="5.20" fill="#c8c8c8"/><rect x="117.60" y="9.80" width="5.20" height="5.20" fill="#b0b0b0"/><rect x="122.50" y="9.80" width="5.20" height="5.20" fill="#c0c0c0"/><rect x="4.90" y="14.70" width="5.20" height="5.20" fill="#d0d0d0"/><rect x="14.70" y="14.70" width="5.20" height="5.20" fill="#f4f4f4"/><rect x="19.60" y="14.70" width="5.20" height="5.20" fill="#d0d0d0"/><rect x="24.50" y="14.70" width="5.20" height="5.20" fill="#d0d0d0"/><rect x="29.40" y="14.70" width="5.20" height="5.20" fill="#dcdcdc"/><rect x="34.30" y="14.70" width="5.20" height="5.20" fill="#b0b0b0"/><rect x="49.00" y="14.70" width="5.20" height="5.20" fill="#f4f4f4"/><rect x="53.90" y="14.70" width="5.20" height="5.20" fill="#e4e4e4"/><rect x="58.80" y="14.70" width="5.20" height="5.20" fill="#b0b0b0"/><rect x="73.50" y="14.70" width="5.20" height="5.20" fill="#e4e4e4"/><rect x="78.40" y="14.70" width="5.20" height="5.20" fill="#f4f4f4"/><rect x="88.20" y="14.70" width="5.20" height="5.20" fill="#dcdcdc"/><rect x="93.10" y="14.70" width="5.20" height="5.20" fill="#d0d0d0"/><rect x="98.00" y="14.70" width="5.20" height="5.20" fill="#dcdcdc"/><rect x="102.90" y="14.70" width="5.20" height="5.20" fill="#ececec"/><rect x="107.80" y="14.70" width="5.20" height="5.20" fill="#f4f4f4"/><rect x="112.70" y="14.70" width="5.20" height="5.20" fill="#b0b0b0"/><rect x="117.60" y="14.70" width="5.20" height="5.20" fill="#b0b0b0"/></svg>
<div class="t" style="left:959.81px;top:805.03px;font-size:14.5px;color:#999;transform:scaleX(1.0227);transform-origin:0 0;">No more activities for Today</div>
<div class="a" style="left:941px;top:1243px;width:749px;height:1px;background:#d9d9d9;"></div>
<div class="a" style="left:944px;top:391px;width:735px;height:456px;border:3px solid #f20000"></div>
<div class="a" style="left:0px;top:1253px;width:1691px;height:1px;background:#6e6e6e;"></div>
<div class="a" style="left:0px;top:0px;width:1px;height:27px;background:#6b6b6b;"></div>
<div class="a" style="left:0px;top:27px;width:1px;height:104px;background:#2b6ea8;"></div>
<div class="a" style="left:1690px;top:273px;width:1px;height:19px;background:#111;"></div>
</body></html>
